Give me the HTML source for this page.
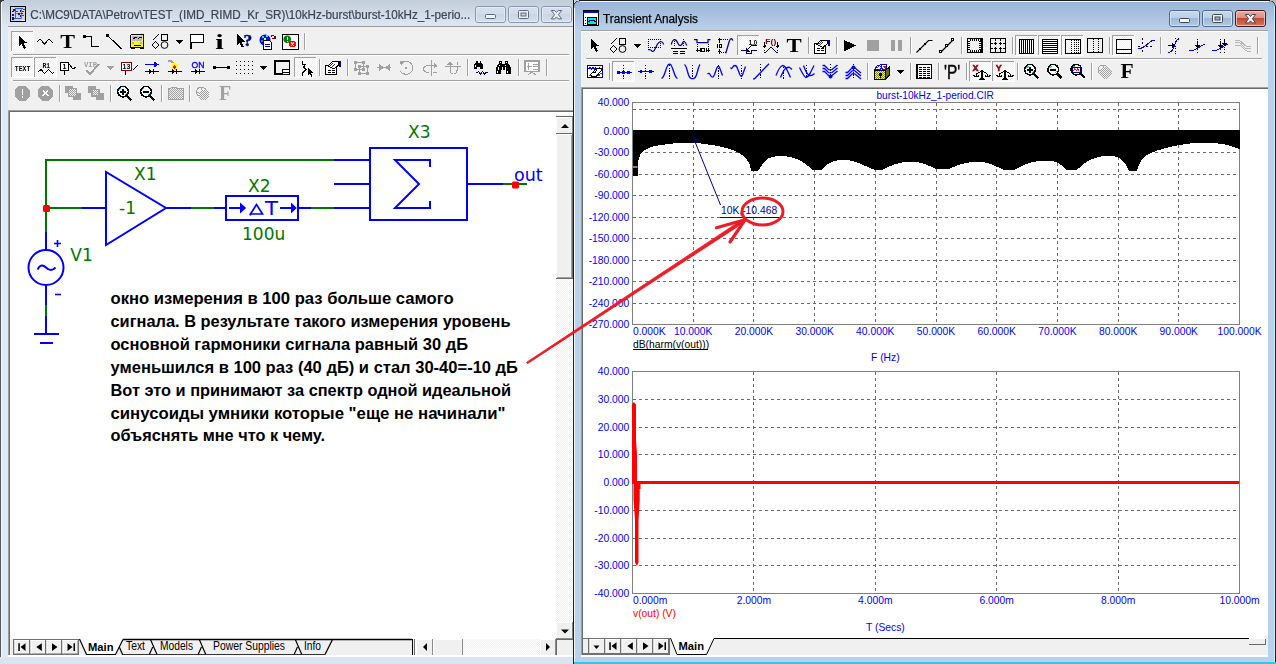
<!DOCTYPE html>
<html lang="ru"><head><meta charset="utf-8"><title>Micro-Cap Transient Analysis</title>
<style>
html,body{margin:0;padding:0;background:#fff;overflow:hidden}
body{width:1276px;height:664px;position:relative;font-family:"Liberation Sans",sans-serif}
svg{position:absolute;left:0;top:0;display:block}
.ls{font-family:"Liberation Sans",sans-serif}
.lsb{font-family:"Liberation Sans",sans-serif;font-weight:bold}
.dv{font-family:"DejaVu Sans",sans-serif}
.dvc{font-family:"DejaVu Sans Condensed","DejaVu Sans",sans-serif;font-weight:bold}
.lser{font-family:"Liberation Serif",serif;font-weight:bold}
.mono{font-family:"Liberation Mono",monospace;font-weight:bold}
.ce{shape-rendering:crispEdges}
</style></head><body>
<svg width="1276" height="664" viewBox="0 0 1276 664">
<defs>
<linearGradient id="gInact" x1="0" y1="0" x2="0" y2="1"><stop offset="0" stop-color="#c1cdd9"/><stop offset="1" stop-color="#dfe9f5"/></linearGradient>
<linearGradient id="gAct" x1="0" y1="0" x2="0" y2="1"><stop offset="0" stop-color="#98b4d6"/><stop offset="1" stop-color="#bbd2eb"/></linearGradient>
<linearGradient id="gBtnI" x1="0" y1="0" x2="0" y2="1"><stop offset="0" stop-color="#d6e0ec"/><stop offset="0.45" stop-color="#d2dde9"/><stop offset="0.45" stop-color="#c7d4e2"/><stop offset="1" stop-color="#d6e1ee"/></linearGradient>
<linearGradient id="gBtnA" x1="0" y1="0" x2="0" y2="1"><stop offset="0" stop-color="#c6d8ed"/><stop offset="0.45" stop-color="#bcd0e8"/><stop offset="0.45" stop-color="#9bb7d6"/><stop offset="1" stop-color="#b4cbe6"/></linearGradient>
<linearGradient id="gBtnX" x1="0" y1="0" x2="0" y2="1"><stop offset="0" stop-color="#ebb0a4"/><stop offset="0.45" stop-color="#dc8e7d"/><stop offset="0.45" stop-color="#c2432a"/><stop offset="1" stop-color="#d67b64"/></linearGradient>
<pattern id="dith" width="2" height="2" patternUnits="userSpaceOnUse"><rect width="2" height="2" fill="#f0f0f0"/><rect width="1" height="1" fill="#fff"/><rect x="1" y="1" width="1" height="1" fill="#fff"/></pattern>
</defs>
<rect x="0" y="0" width="573" height="664" fill="#dfe9f5" />
<rect x="0" y="0" width="573" height="27" fill="url(#gInact)" />
<rect x="0" y="0" width="1" height="664" fill="#55595e" />
<rect x="1" y="2" width="1" height="662" fill="#f4f8fc" />
<path d="M0 0h4v1h-2v1h-1v2h-1z" fill="#3a3a3a" stroke="none" stroke-width="1" />
<rect x="8" y="26" width="565" height="631" fill="#f0f0f0" />
<rect x="8" y="26" width="565" height="1" fill="#9a9a9a" />
<rect x="0" y="657" width="573" height="7" fill="#d9e4f2" />
<rect x="475.5" y="6.5" width="30" height="16" rx="2.5" fill="url(#gBtnI)" stroke="#8a97ab" stroke-width="1"/>
<rect x="476.5" y="7.5" width="28" height="14" rx="1.5" fill="none" stroke="#e6edf6" stroke-width="1" opacity="0.8"/>
<rect x="485.5" y="14.5" width="10" height="4" rx="1" fill="#eef1f5" stroke="#5f6878" stroke-width="1"/>
<rect x="508.5" y="6.5" width="30" height="16" rx="2.5" fill="url(#gBtnI)" stroke="#8a97ab" stroke-width="1"/>
<rect x="509.5" y="7.5" width="28" height="14" rx="1.5" fill="none" stroke="#e6edf6" stroke-width="1" opacity="0.8"/>
<rect x="518.5" y="10.5" width="10" height="8" rx="1" fill="#eef1f5" stroke="#5f6878" stroke-width="1"/>
<rect x="521.0" y="13.0" width="5" height="3" fill="#c9d5e3" stroke="#5f6878" stroke-width="1"/>
<rect x="541.5" y="6.5" width="30" height="16" rx="2.5" fill="url(#gBtnI)" stroke="#8a97ab" stroke-width="1"/>
<rect x="542.5" y="7.5" width="28" height="14" rx="1.5" fill="none" stroke="#e6edf6" stroke-width="1" opacity="0.8"/>
<path d="M551.3 10.5L554.8 10.5L556.5 12.5L558.2 10.5L561.7 10.5L558.4 14.7L561.7 18.9L558.2 18.9L556.5 16.9L554.8 18.9L551.3 18.9L554.6 14.7z" fill="#eef1f5" stroke="#5f6878" stroke-width="1" stroke-linejoin="round"/>
<path d="M573 664V7a7 7 0 0 1 7-7h689a7 7 0 0 1 7 7V664z" fill="#b9d1ea"/>
<path d="M574 31V7a6 6 0 0 1 6-6h689a6 6 0 0 1 6 6V31z" fill="url(#gAct)"/>
<rect x="580" y="1" width="689" height="1" fill="#f2f7fc" />
<rect x="1274" y="6" width="1" height="656" fill="#cdeefb" />
<path d="M573.5 664V7a6.500 6.500 0 0 1 6.500-6.500h689a6.500 6.500 0 0 1 6.500 6.500V664" fill="none" stroke="#1c1c1c" stroke-width="1"/>
<rect x="573" y="0" width="703" height="1" fill="#1c1c1c" />
<path d="M573 0h6v1h-3v1h-1v1h-1v2h-1z" fill="#c9d3de" stroke="none" stroke-width="1" />
<path d="M1276 0h-6v1h3v1h1v1h1v2h1z" fill="#b8b8b8" stroke="none" stroke-width="1" />
<rect x="574" y="8" width="1" height="656" fill="#f4f8fc" />
<rect x="581" y="30" width="687" height="627" fill="#fff" />
<rect x="581" y="30" width="687" height="1" fill="#a0a0a0" />
<rect x="581" y="31" width="687" height="1" fill="#fff" />
<rect x="581" y="32" width="687" height="55" fill="#f0f0f0" />
<rect x="581" y="87" width="687" height="570" fill="#fff" />
<rect x="581" y="87" width="687" height="1" fill="#a0a0a0" />
<rect x="581" y="87" width="1" height="568" fill="#a0a0a0" />
<rect x="582" y="88" width="686" height="1" fill="#696969" />
<rect x="582" y="88" width="1" height="567" fill="#696969" />
<rect x="574" y="662" width="702" height="2" fill="#30c8e8" />
<rect x="573" y="0" width="1" height="664" fill="#1c1c1c" />
<rect x="1169.5" y="10.5" width="30" height="16" rx="2.5" fill="url(#gBtnA)" stroke="#52688a" stroke-width="1"/>
<rect x="1170.5" y="11.5" width="28" height="14" rx="1.5" fill="none" stroke="#dbe7f5" stroke-width="1" opacity="0.8"/>
<rect x="1179.5" y="18.5" width="10" height="4" rx="1" fill="#f4f4f4" stroke="#3c4656" stroke-width="1"/>
<rect x="1202.5" y="10.5" width="30" height="16" rx="2.5" fill="url(#gBtnA)" stroke="#52688a" stroke-width="1"/>
<rect x="1203.5" y="11.5" width="28" height="14" rx="1.5" fill="none" stroke="#dbe7f5" stroke-width="1" opacity="0.8"/>
<rect x="1212.5" y="14.5" width="10" height="8" rx="1" fill="#f4f4f4" stroke="#3c4656" stroke-width="1"/>
<rect x="1215.0" y="17.0" width="5" height="3" fill="#9ab8da" stroke="#3c4656" stroke-width="1"/>
<rect x="1235.5" y="10.5" width="30" height="16" rx="2.5" fill="url(#gBtnX)" stroke="#4a1a24" stroke-width="1"/>
<rect x="1236.5" y="11.5" width="28" height="14" rx="1.5" fill="none" stroke="#f3c9c0" stroke-width="1" opacity="0.8"/>
<path d="M1245.3 14.5L1248.8 14.5L1250.5 16.5L1252.2 14.5L1255.7 14.5L1252.4 18.7L1255.7 22.9L1252.2 22.9L1250.5 20.9L1248.8 22.9L1245.3 22.9L1248.6 18.7z" fill="#f4f4f4" stroke="#3c4656" stroke-width="1" stroke-linejoin="round"/>
<rect x="8" y="110" width="565" height="546" fill="#a0a0a0" />
<rect x="9" y="111" width="564" height="545" fill="#696969" />
<rect x="10" y="112" width="563" height="544" fill="#fff" />
<rect x="556" y="112" width="17" height="527" fill="url(#dith)" />
<rect x="556" y="112" width="17" height="4" fill="#fff" />
<rect x="556" y="115" width="16" height="1" fill="#f0f0f0" />
<rect x="556" y="116" width="17" height="1" fill="#696969" />
<rect x="556" y="117" width="17" height="17" fill="#f0f0f0" />
<rect x="556" y="117" width="17" height="1" fill="#fff" />
<rect x="556" y="117" width="1" height="17" fill="#fff" />
<rect x="556" y="133" width="17" height="1" fill="#8a8a8a" />
<rect x="572" y="117" width="1" height="17" fill="#8a8a8a" />
<rect x="556" y="133" width="17" height="1" fill="#696969" />
<path d="M561 128h8l-4-4z" fill="#000" stroke="none" stroke-width="1" />
<rect x="556" y="134" width="17" height="145" fill="#f0f0f0" />
<rect x="556" y="134" width="17" height="1" fill="#fff" />
<rect x="556" y="134" width="1" height="145" fill="#fff" />
<rect x="556" y="278" width="17" height="1" fill="#8a8a8a" />
<rect x="572" y="134" width="1" height="145" fill="#8a8a8a" />
<rect x="556" y="278" width="17" height="1" fill="#696969" />
<rect x="557" y="277" width="15" height="1" fill="#a0a0a0" />
<rect x="571" y="135" width="1" height="143" fill="#a0a0a0" />
<rect x="572" y="134" width="1" height="145" fill="#696969" />
<rect x="556" y="622" width="17" height="17" fill="#f0f0f0" />
<rect x="556" y="622" width="17" height="1" fill="#fff" />
<rect x="556" y="622" width="1" height="17" fill="#fff" />
<rect x="556" y="638" width="17" height="1" fill="#8a8a8a" />
<rect x="572" y="622" width="1" height="17" fill="#8a8a8a" />
<path d="M561 629.500h8l-4 4z" fill="#000" stroke="none" stroke-width="1" />
<rect x="10" y="639" width="563" height="17" fill="#f0f0f0" />
<rect x="13" y="639" width="66" height="16" fill="#707070" />
<rect x="14.5" y="640" width="14.5" height="13.500" fill="#f0f0f0"/>
<rect x="14.5" y="640" width="14.5" height="1" fill="#fff"/><rect x="14.5" y="640" width="1" height="13.500" fill="#fff"/>
<rect x="30.5" y="640" width="14.5" height="13.500" fill="#f0f0f0"/>
<rect x="30.5" y="640" width="14.5" height="1" fill="#fff"/><rect x="30.5" y="640" width="1" height="13.500" fill="#fff"/>
<rect x="46.5" y="640" width="14.5" height="13.500" fill="#f0f0f0"/>
<rect x="46.5" y="640" width="14.5" height="1" fill="#fff"/><rect x="46.5" y="640" width="1" height="13.500" fill="#fff"/>
<rect x="62.5" y="640" width="15" height="13.500" fill="#f0f0f0"/>
<rect x="62.5" y="640" width="15" height="1" fill="#fff"/><rect x="62.5" y="640" width="1" height="13.500" fill="#fff"/>
<path d="M18.300 643.300h1.500v7.600h-1.500z M25.500 643.300v7.600l-5-3.800z" fill="#000" stroke="none" stroke-width="1" />
<path d="M41.800 643.300v7.600l-5.500-3.800z" fill="#000" stroke="none" stroke-width="1" />
<path d="M52 643.300v7.600l5.500-3.800z" fill="#000" stroke="none" stroke-width="1" />
<path d="M67.500 643.300v7.600l5-3.800z M73.500 643.300h1.500v7.600h-1.500z" fill="#000" stroke="none" stroke-width="1" />
<rect x="79" y="639" width="333" height="16" fill="#f0f0f0" />
<path d="M79.500 639L86.500 655H115.500L123 639z" fill="#fff" stroke="none" stroke-width="1" />
<line x1="123" y1="639.5" x2="412" y2="639.5" stroke="#000" stroke-width="1.4" />
<line x1="122" y1="654.5" x2="325" y2="654.5" stroke="#333" stroke-width="1" />
<path d="M79.500 639L86.500 654.500H115.500L123 639.500" fill="none" stroke="#000" stroke-width="1.2" />
<path d="M119.300 647L122.600 654.500" fill="none" stroke="#000" stroke-width="1.2" />
<path d="M150.5 639.500L157.0 654.500 M149.3 654.500L152.7 647" fill="none" stroke="#000" stroke-width="1.2" />
<path d="M199.3 639.500L205.8 654.500 M198.10000000000002 654.500L201.5 647" fill="none" stroke="#000" stroke-width="1.2" />
<path d="M295.3 639.500L301.8 654.500 M294.1 654.500L297.5 647" fill="none" stroke="#000" stroke-width="1.2" />
<path d="M325 654.500L332.500 639.500" fill="none" stroke="#000" stroke-width="1.2" />
<text x="88" y="650.5" font-size="11" fill="#000" class="lsb" text-anchor="start" textLength="25.5" lengthAdjust="spacingAndGlyphs">Main</text>
<text x="126" y="650.3" font-size="12" fill="#000" class="ls" text-anchor="start" textLength="19" lengthAdjust="spacingAndGlyphs">Text</text>
<text x="160" y="650.3" font-size="12" fill="#000" class="ls" text-anchor="start" textLength="33" lengthAdjust="spacingAndGlyphs">Models</text>
<text x="213" y="650.3" font-size="12" fill="#000" class="ls" text-anchor="start" textLength="72" lengthAdjust="spacingAndGlyphs">Power Supplies</text>
<text x="304" y="650.3" font-size="12" fill="#000" class="ls" text-anchor="start" textLength="17" lengthAdjust="spacingAndGlyphs">Info</text>
<rect x="412" y="639" width="1" height="17" fill="#000" />
<rect x="413" y="639" width="1" height="17" fill="#f0f0f0" />
<rect x="414" y="639" width="1" height="17" fill="#696969" />
<rect x="415" y="639" width="1" height="17" fill="#fff" />
<rect x="416" y="639" width="140" height="17" fill="url(#dith)" />
<rect x="416" y="639" width="17" height="17" fill="#f0f0f0" />
<rect x="416" y="639" width="17" height="1" fill="#fff" />
<rect x="416" y="639" width="1" height="17" fill="#fff" />
<rect x="416" y="655" width="17" height="1" fill="#8a8a8a" />
<rect x="432" y="639" width="1" height="17" fill="#8a8a8a" />
<path d="M427 643v8l-4-4z" fill="#000" stroke="none" stroke-width="1" />
<rect x="433" y="639" width="30" height="17" fill="#f0f0f0" />
<rect x="433" y="639" width="30" height="1" fill="#fff" />
<rect x="433" y="639" width="1" height="17" fill="#fff" />
<rect x="433" y="655" width="30" height="1" fill="#8a8a8a" />
<rect x="462" y="639" width="1" height="17" fill="#8a8a8a" />
<rect x="540" y="639" width="16" height="17" fill="#f0f0f0" />
<rect x="540" y="639" width="16" height="1" fill="#fff" />
<rect x="540" y="639" width="1" height="17" fill="#fff" />
<rect x="540" y="655" width="16" height="1" fill="#8a8a8a" />
<rect x="555" y="639" width="1" height="17" fill="#8a8a8a" />
<path d="M546 643v8l4-4z" fill="#000" stroke="none" stroke-width="1" />
<rect x="556" y="639" width="17" height="17" fill="#f0f0f0" />
<rect x="556" y="639" width="17" height="1" fill="#696969" />
<rect x="556" y="639" width="1" height="16" fill="#696969" />
<rect x="8" y="655" width="565" height="2" fill="#fff" />
<g fill="none" stroke-width="2" stroke-linecap="butt" class="ce">
<path d="M46 232V160H334" stroke="#007800"/>
<path d="M334 160H370" stroke="#0000ff"/>
<path d="M46 208H82" stroke="#007800"/><path d="M82 208H106" stroke="#0000ff"/>
<path d="M166 208H191" stroke="#0000ff"/><path d="M191 208H214" stroke="#007800"/><path d="M214 208H226" stroke="#0000ff"/>
<path d="M299 208H311" stroke="#0000ff"/><path d="M311 208H334" stroke="#007800"/><path d="M334 208H370" stroke="#0000ff"/>
<path d="M334 184H370" stroke="#0000ff"/>
<path d="M467 184H503" stroke="#0000ff"/><path d="M503 184H527" stroke="#007800"/>
<path d="M46 232V250" stroke="#0000ff"/>
<path d="M46 285V305" stroke="#0000ff"/><path d="M46 305V315.500" stroke="#007800"/><path d="M46 315.500V334" stroke="#0000ff"/>
<path d="M34 333.500H59 M40 343H53" stroke="#0000ff"/>
<rect x="226" y="196" width="72" height="24" stroke="#0000ff"/>
<rect x="370" y="148" width="97" height="72" stroke="#0000ff"/>
</g>
<g fill="none" stroke="#0000ff" stroke-width="2">
<path d="M106 172V245L166 208z" stroke-linejoin="miter"/>
<path d="M430 167V160H395L419 184L395 208H430V201" stroke-linejoin="miter"/>
<circle cx="46" cy="267.500" r="17.500"/>
<path d="M37.500 269.500q3.500-7 8.500-2t9.500 0" stroke-width="2"/>
</g>
<g stroke="#0000ff" stroke-width="2" fill="#0000ff"><path d="M229 208H241" /><path d="M240 202.500L246.200 208L240 213.500z" stroke="none"/><path d="M280 208H292"/><path d="M291 202.500L296.800 208L291 213.500z" stroke="none"/><path d="M250.500 214L256.500 204.500L262.500 214z M250.500 214v1.500" fill="none" stroke-width="1.700"/></g>
<text x="265" y="215" font-size="19" fill="#0000ff" class="dv" text-anchor="start" textLength="13" lengthAdjust="spacingAndGlyphs">T</text>
<path d="M54 243.500h7 M57.500 240v7" fill="none" stroke="#0000ff" stroke-width="1.6" />
<path d="M55 294.500h6" fill="none" stroke="#0000ff" stroke-width="1.6" />
<rect x="43" y="205" width="7" height="7" rx="1.5" fill="#ff0000"/>
<rect x="512" y="181.500" width="7" height="7" rx="1.5" fill="#ff0000"/>
<text x="134" y="180" font-size="17" fill="#007800" class="dv" text-anchor="start" >X1</text>
<text x="119" y="214" font-size="17" fill="#007800" class="dv" text-anchor="start" >-1</text>
<text x="248" y="191.5" font-size="17" fill="#007800" class="dv" text-anchor="start" >X2</text>
<text x="242" y="240" font-size="17" fill="#007800" class="dv" text-anchor="start" >100u</text>
<text x="408" y="137.5" font-size="17" fill="#007800" class="dv" text-anchor="start" >X3</text>
<text x="70.3" y="261.3" font-size="17" fill="#007800" class="dv" text-anchor="start" >V1</text>
<text x="514" y="181" font-size="17.5" fill="#0000ff" class="dv" text-anchor="start" >out</text>
<text x="110.5" y="304" font-size="17" fill="#000" class="lsb" text-anchor="start" textLength="343.1" lengthAdjust="spacingAndGlyphs">окно измерения в 100 раз больше самого</text>
<text x="110.5" y="327" font-size="17" fill="#000" class="lsb" text-anchor="start" textLength="400.0" lengthAdjust="spacingAndGlyphs">сигнала. В результате такого измерения уровень</text>
<text x="110.5" y="349.7" font-size="17" fill="#000" class="lsb" text-anchor="start" textLength="357.5" lengthAdjust="spacingAndGlyphs">основной гармоники сигнала равный 30 дБ</text>
<text x="110.5" y="372.6" font-size="17" fill="#000" class="lsb" text-anchor="start" textLength="407.5" lengthAdjust="spacingAndGlyphs">уменьшился в 100 раз (40 дБ) и стал 30-40=-10 дБ</text>
<text x="110.5" y="395.8" font-size="17" fill="#000" class="lsb" text-anchor="start" textLength="400.5" lengthAdjust="spacingAndGlyphs">Вот это и принимают за спектр одной идеальной</text>
<text x="110.5" y="418.6" font-size="17" fill="#000" class="lsb" text-anchor="start" textLength="395.0" lengthAdjust="spacingAndGlyphs">синусоиды умники которые &quot;еще не начинали&quot;</text>
<text x="110.5" y="441.4" font-size="17" fill="#000" class="lsb" text-anchor="start" textLength="214.5" lengthAdjust="spacingAndGlyphs">объяснять мне что к чему.</text>
<line x1="693.5" y1="103" x2="693.5" y2="324.5" stroke="#6a6a6a" stroke-width="1" stroke-dasharray="3 3" class="ce"/>
<line x1="753.5" y1="103" x2="753.5" y2="324.5" stroke="#6a6a6a" stroke-width="1" stroke-dasharray="3 3" class="ce"/>
<line x1="814.5" y1="103" x2="814.5" y2="324.5" stroke="#6a6a6a" stroke-width="1" stroke-dasharray="3 3" class="ce"/>
<line x1="875.5" y1="103" x2="875.5" y2="324.5" stroke="#6a6a6a" stroke-width="1" stroke-dasharray="3 3" class="ce"/>
<line x1="936.5" y1="103" x2="936.5" y2="324.5" stroke="#6a6a6a" stroke-width="1" stroke-dasharray="3 3" class="ce"/>
<line x1="996.5" y1="103" x2="996.5" y2="324.5" stroke="#6a6a6a" stroke-width="1" stroke-dasharray="3 3" class="ce"/>
<line x1="1057.5" y1="103" x2="1057.5" y2="324.5" stroke="#6a6a6a" stroke-width="1" stroke-dasharray="3 3" class="ce"/>
<line x1="1118.5" y1="103" x2="1118.5" y2="324.5" stroke="#6a6a6a" stroke-width="1" stroke-dasharray="3 3" class="ce"/>
<line x1="1178.5" y1="103" x2="1178.5" y2="324.5" stroke="#6a6a6a" stroke-width="1" stroke-dasharray="3 3" class="ce"/>
<line x1="633" y1="109.5" x2="1237" y2="109.5" stroke="#6a6a6a" stroke-width="1" stroke-dasharray="3 3" class="ce"/>
<line x1="633" y1="131.5" x2="1237" y2="131.5" stroke="#6a6a6a" stroke-width="1" stroke-dasharray="3 3" class="ce"/>
<line x1="633" y1="152.5" x2="1237" y2="152.5" stroke="#6a6a6a" stroke-width="1" stroke-dasharray="3 3" class="ce"/>
<line x1="633" y1="174.5" x2="1237" y2="174.5" stroke="#6a6a6a" stroke-width="1" stroke-dasharray="3 3" class="ce"/>
<line x1="633" y1="195.5" x2="1237" y2="195.5" stroke="#6a6a6a" stroke-width="1" stroke-dasharray="3 3" class="ce"/>
<line x1="633" y1="217.5" x2="1237" y2="217.5" stroke="#6a6a6a" stroke-width="1" stroke-dasharray="3 3" class="ce"/>
<line x1="633" y1="238.5" x2="1237" y2="238.5" stroke="#6a6a6a" stroke-width="1" stroke-dasharray="3 3" class="ce"/>
<line x1="633" y1="260.5" x2="1237" y2="260.5" stroke="#6a6a6a" stroke-width="1" stroke-dasharray="3 3" class="ce"/>
<line x1="633" y1="281.5" x2="1237" y2="281.5" stroke="#6a6a6a" stroke-width="1" stroke-dasharray="3 3" class="ce"/>
<line x1="633" y1="303.5" x2="1237" y2="303.5" stroke="#6a6a6a" stroke-width="1" stroke-dasharray="3 3" class="ce"/>
<rect x="632.5" y="102.5" width="607.0" height="222.0" fill="none" stroke="#808080" stroke-width="1"/>
<path d="M633 130H1240V149.5L1240 149.5L1237 148.2L1234 147L1230 145.7L1225 144.5L1219 143.6L1212 143L1203 142.7L1194 143L1187 143.8L1180 145L1173 146.3L1167 147.8L1161 149.4L1155 151.3L1151 153L1147 155L1144 157L1142 159.5L1140.5 162L1139 165L1138 168L1137 170.5L1129 170.5L1127 167L1126 165L1124 162.5L1122 160.3L1120 158.5L1117 157.2L1114 156.3L1108 156L1102 156.3L1098 157.2L1094 158.5L1090 160L1087 161.5L1084 163.5L1081 166L1079 168L1077 169.8L1066 169.8L1063 167L1061 165L1059 163.5L1056 162.2L1053 161.3L1050 161L1045 160.6L1039 161L1033 162L1028 163.5L1024 165L1020 167L1017 168.4L1014 169.8L1004 169.8L1000 168L997 166.8L993 165L989 163.5L984 162.3L980 162L975 162L970 162.4L965 163.3L960 164.6L956 166L952 167.5L949 168.8L936 168.8L933 167.5L929 165.8L925 164L921 162.8L916 162L911 161.8L906 162L901 162.6L897 163.7L892 165.3L888 167L885 168.5L882 170L875 170L870 168L866 166.2L861 164L857 162.4L852 161L848 160.2L843 159.8L838 160.3L833 161.5L829 163.3L826 165.5L824 167.5L821.5 169.8L812 169.8L808 166L805 163.5L801 161L796 158.8L790 157L786 156.3L781 156L777 156.2L773 156.8L769 158.2L766 160L764 162L762 165L760 168L758.5 170.5L751 170.5L750 165L748 161.5L746 158.5L743 155.7L740 153.5L735 151L730 149L721 146.8L712 145L702 143.6L693 142.8L685 142.7L677 143L668 144L660 145.2L653 146.6L647 148.7L643 151L640 155L638.5 160L637.5 166L637.5 176H633z" fill="#000" class="ce"/>
<rect x="633" y="166.5" width="4.5" height="1" fill="#fff" />
<text x="629.3" y="106.2" font-size="10.3" fill="#0000ff" class="ls" text-anchor="end" >40.000</text>
<text x="629.3" y="135.2" font-size="10.3" fill="#0000ff" class="ls" text-anchor="end" >0.000</text>
<text x="629.3" y="156.2" font-size="10.3" fill="#0000ff" class="ls" text-anchor="end" >-30.000</text>
<text x="629.3" y="178.2" font-size="10.3" fill="#0000ff" class="ls" text-anchor="end" >-60.000</text>
<text x="629.3" y="199.2" font-size="10.3" fill="#0000ff" class="ls" text-anchor="end" >-90.000</text>
<text x="629.3" y="221.2" font-size="10.3" fill="#0000ff" class="ls" text-anchor="end" >-120.000</text>
<text x="629.3" y="242.2" font-size="10.3" fill="#0000ff" class="ls" text-anchor="end" >-150.000</text>
<text x="629.3" y="264.2" font-size="10.3" fill="#0000ff" class="ls" text-anchor="end" >-180.000</text>
<text x="629.3" y="285.2" font-size="10.3" fill="#0000ff" class="ls" text-anchor="end" >-210.000</text>
<text x="629.3" y="307.2" font-size="10.3" fill="#0000ff" class="ls" text-anchor="end" >-240.000</text>
<text x="629.3" y="328.2" font-size="10.3" fill="#0000ff" class="ls" text-anchor="end" >-270.000</text>
<text x="633" y="334.7" font-size="10.3" fill="#0000ff" class="ls" text-anchor="start" >0.000K</text>
<text x="693.2" y="334.7" font-size="10.3" fill="#0000ff" class="ls" text-anchor="middle" >10.000K</text>
<text x="753.9" y="334.7" font-size="10.3" fill="#0000ff" class="ls" text-anchor="middle" >20.000K</text>
<text x="814.6" y="334.7" font-size="10.3" fill="#0000ff" class="ls" text-anchor="middle" >30.000K</text>
<text x="875.3" y="334.7" font-size="10.3" fill="#0000ff" class="ls" text-anchor="middle" >40.000K</text>
<text x="936.0" y="334.7" font-size="10.3" fill="#0000ff" class="ls" text-anchor="middle" >50.000K</text>
<text x="996.7" y="334.7" font-size="10.3" fill="#0000ff" class="ls" text-anchor="middle" >60.000K</text>
<text x="1057.4" y="334.7" font-size="10.3" fill="#0000ff" class="ls" text-anchor="middle" >70.000K</text>
<text x="1118.1" y="334.7" font-size="10.3" fill="#0000ff" class="ls" text-anchor="middle" >80.000K</text>
<text x="1178.8000000000002" y="334.7" font-size="10.3" fill="#0000ff" class="ls" text-anchor="middle" >90.000K</text>
<text x="1239.5" y="334.7" font-size="10.3" fill="#0000ff" class="ls" text-anchor="middle" >100.000K</text>
<text x="876.5" y="99" font-size="10.3" fill="#0000ff" class="ls" text-anchor="start" textLength="117.300" lengthAdjust="spacingAndGlyphs">burst-10kHz_1-period.CIR</text>
<text x="633" y="347.5" font-size="10.3" fill="#000" class="ls" text-anchor="start" >dB(harm(v(out)))</text>
<rect x="633" y="349" width="75" height="1" fill="#000" />
<text x="871" y="361" font-size="10.3" fill="#0000ff" class="ls" text-anchor="start" >F (Hz)</text>
<line x1="693.5" y1="138" x2="720.5" y2="205" stroke="#000090" stroke-width="1" />
<path d="M692.5 137l5 3.500l-3 1.500z" fill="#000090" stroke="none" stroke-width="1" />
<line x1="720" y1="217.5" x2="779" y2="217.5" stroke="#000090" stroke-width="1" />
<text x="721" y="214" font-size="10.3" fill="#000090" class="ls" text-anchor="start" >10K,-10.468</text>
<line x1="753.5" y1="372" x2="753.5" y2="593.5" stroke="#6a6a6a" stroke-width="1" stroke-dasharray="3 3" class="ce"/>
<line x1="875.5" y1="372" x2="875.5" y2="593.5" stroke="#6a6a6a" stroke-width="1" stroke-dasharray="3 3" class="ce"/>
<line x1="996.5" y1="372" x2="996.5" y2="593.5" stroke="#6a6a6a" stroke-width="1" stroke-dasharray="3 3" class="ce"/>
<line x1="1118.5" y1="372" x2="1118.5" y2="593.5" stroke="#6a6a6a" stroke-width="1" stroke-dasharray="3 3" class="ce"/>
<line x1="633" y1="399.5" x2="1237" y2="399.5" stroke="#6a6a6a" stroke-width="1" stroke-dasharray="3 3" class="ce"/>
<line x1="633" y1="427.5" x2="1237" y2="427.5" stroke="#6a6a6a" stroke-width="1" stroke-dasharray="3 3" class="ce"/>
<line x1="633" y1="454.5" x2="1237" y2="454.5" stroke="#6a6a6a" stroke-width="1" stroke-dasharray="3 3" class="ce"/>
<line x1="633" y1="482.5" x2="1237" y2="482.5" stroke="#6a6a6a" stroke-width="1" stroke-dasharray="3 3" class="ce"/>
<line x1="633" y1="510.5" x2="1237" y2="510.5" stroke="#6a6a6a" stroke-width="1" stroke-dasharray="3 3" class="ce"/>
<line x1="633" y1="538.5" x2="1237" y2="538.5" stroke="#6a6a6a" stroke-width="1" stroke-dasharray="3 3" class="ce"/>
<line x1="633" y1="565.5" x2="1237" y2="565.5" stroke="#6a6a6a" stroke-width="1" stroke-dasharray="3 3" class="ce"/>
<rect x="632.5" y="371.5" width="607.0" height="222.0" fill="none" stroke="#808080" stroke-width="1"/>
<text x="629.3" y="375.2" font-size="10.3" fill="#0000ff" class="ls" text-anchor="end" >40.000</text>
<text x="629.3" y="403.2" font-size="10.3" fill="#0000ff" class="ls" text-anchor="end" >30.000</text>
<text x="629.3" y="431.2" font-size="10.3" fill="#0000ff" class="ls" text-anchor="end" >20.000</text>
<text x="629.3" y="458.2" font-size="10.3" fill="#0000ff" class="ls" text-anchor="end" >10.000</text>
<text x="629.3" y="486.2" font-size="10.3" fill="#0000ff" class="ls" text-anchor="end" >0.000</text>
<text x="629.3" y="514.2" font-size="10.3" fill="#0000ff" class="ls" text-anchor="end" >-10.000</text>
<text x="629.3" y="542.2" font-size="10.3" fill="#0000ff" class="ls" text-anchor="end" >-20.000</text>
<text x="629.3" y="569.2" font-size="10.3" fill="#0000ff" class="ls" text-anchor="end" >-30.000</text>
<text x="629.3" y="597.2" font-size="10.3" fill="#0000ff" class="ls" text-anchor="end" >-40.000</text>
<text x="633" y="604" font-size="10.3" fill="#0000ff" class="ls" text-anchor="start" >0.000m</text>
<text x="753.9" y="604" font-size="10.3" fill="#0000ff" class="ls" text-anchor="middle" >2.000m</text>
<text x="875.3" y="604" font-size="10.3" fill="#0000ff" class="ls" text-anchor="middle" >4.000m</text>
<text x="996.7" y="604" font-size="10.3" fill="#0000ff" class="ls" text-anchor="middle" >6.000m</text>
<text x="1118.1" y="604" font-size="10.3" fill="#0000ff" class="ls" text-anchor="middle" >8.000m</text>
<text x="1239.5" y="604" font-size="10.3" fill="#0000ff" class="ls" text-anchor="middle" >10.000m</text>
<text x="633" y="617" font-size="10.3" fill="#ff0000" class="ls" text-anchor="start" >v(out) (V)</text>
<text x="866" y="631" font-size="10.3" fill="#0000ff" class="ls" text-anchor="start" >T (Secs)</text>
<path d="M637 482.500H1239" fill="none" stroke="#ff0000" stroke-width="3"/>
<path d="M632 484V404.500l1.800-2.500l2.200 2.500V440l1 14v27h3.500v8h-0.800V500l-1.200 20v42.500l-1.700 3.500l-1.800-3.500V520l-1.500-20V484z" fill="#ff0000"/>
<g shape-rendering="crispEdges" style="will-change:transform">
<text x="30.3" y="19" font-size="12" fill="#3e4450" class="ls" text-anchor="start" textLength="440" lengthAdjust="spacingAndGlyphs" stroke="#3e4450" stroke-width="0.2">C:\MC9\DATA\Petrov\TEST_(IMD_RIMD_Kr_SR)\10kHz-burst\burst-10kHz_1-perio...</text>
<text x="603" y="23" font-size="12.3" fill="#000" class="ls" text-anchor="start" textLength="95" lengthAdjust="spacingAndGlyphs" stroke="#000" stroke-width="0.25">Transient Analysis</text>
<rect x="10" y="6" width="16" height="16" fill="#000" />
<rect x="11" y="7" width="14" height="14" fill="#d8d4c8" />
<g class="ce">
<rect x="15" y="8" width="1" height="11" fill="#2a5be0" />
<rect x="15" y="8" width="8" height="1" fill="#2a5be0" />
<rect x="13" y="18" width="9" height="1" fill="#2a5be0" />
<rect x="21" y="9" width="1" height="10" fill="#5a86e8" />
<rect x="16" y="13" width="5" height="1" fill="#5a86e8" />
<rect x="11.5" y="10.5" width="2.5" height="1.5" fill="#0000ff" />
<rect x="13" y="9" width="1.5" height="2" fill="#0000ff" />
<rect x="12" y="13.5" width="2" height="2" fill="#0000ff" />
<rect x="12" y="17" width="1.5" height="3" fill="#0000ff" />
<rect x="18" y="12.5" width="2" height="2" fill="#0000ff" />
<rect x="19.5" y="10" width="1.5" height="2" fill="#0000ff" />
<rect x="19.5" y="14.5" width="1.5" height="2" fill="#0000ff" />
<rect x="21" y="12.5" width="1.5" height="1.5" fill="#0000ff" />
<rect x="16.2" y="10.7" width="2" height="1.2" fill="#ff0000" />
<rect x="22.8" y="8.8" width="2" height="1.2" fill="#ff0000" />
<rect x="21.8" y="11" width="2" height="1.2" fill="#ff0000" />
<rect x="21.8" y="15" width="2" height="1.2" fill="#ff0000" />
<rect x="20.5" y="19.5" width="4" height="1" fill="#fff" />
</g>
<rect x="583" y="10" width="16" height="16" fill="#000" />
<rect x="584" y="11" width="14" height="2" fill="#0000ff" />
<rect x="584" y="13" width="14" height="12" fill="#fff" />
<rect x="587" y="17" width="10" height="8" fill="#000" />
<rect x="588" y="18" width="8" height="6" fill="#00e8e8" />
<path d="M588.500 22q3.500-4 7 0" fill="none" stroke="#003" stroke-width="1" />
<rect x="585" y="17" width="1" height="1" fill="#000" />
<rect x="585" y="20" width="1" height="1" fill="#000" />
<rect x="585" y="23" width="1" height="1" fill="#000" />
<rect x="587" y="15.5" width="9" height="0.6" fill="#888" />
<rect x="13" y="54" width="556" height="1" fill="#a0a0a0" />
<rect x="13" y="55" width="556" height="1" fill="#fff" />
<rect x="13" y="80" width="556" height="1" fill="#a0a0a0" />
<rect x="13" y="81" width="556" height="1" fill="#fff" />
<rect x="11" y="31" width="22" height="20" fill="url(#dith)" />
<rect x="11" y="31" width="22" height="1" fill="#a0a0a0" />
<rect x="11" y="31" width="1" height="20" fill="#a0a0a0" />
<rect x="11" y="51" width="23" height="1" fill="#fff" />
<rect x="33" y="31" width="1" height="21" fill="#fff" />
<path d="M19 35.5v11.2l2.600-2.500l2.200 4.800l2.100-1l-2.200-4.600h3.800z" fill="#000" stroke="none" stroke-width="1" />
<path d="M36.500 42.500l3.500-3.500l4.500 5l4.500-5l4.500 4.500" fill="none" stroke="#000" stroke-width="1" stroke-linejoin="miter"/>
<text x="60.3" y="48" font-size="19.5" fill="#000" class="lser" text-anchor="start" textLength="14.800" lengthAdjust="spacingAndGlyphs">T</text>
<rect x="83" y="35" width="3" height="3" fill="#000" />
<path d="M86 36.500h5.500v10h7" fill="none" stroke="#000" stroke-width="1.2" />
<rect x="106" y="34" width="3" height="3" fill="#000" />
<path d="M108 36l13.500 13" fill="none" stroke="#000" stroke-width="1.2" />
<g>
<rect x="130.500" y="34.500" width="13" height="13" rx="1.500" fill="#ffff00" stroke="#000" stroke-width="1"/>
<rect x="132" y="36" width="10" height="5" fill="#b8b8c8" />
<path d="M133.500 39l1.500-1.500h2 M138 39l1.500-1.500h2" fill="none" stroke="#000" stroke-width="1" />
<rect x="131" y="47" width="3.5" height="2" fill="#000" />
<rect x="140" y="47" width="3.5" height="2" fill="#000" />
<rect x="133.5" y="44.5" width="7" height="1.2" fill="#000" />
<rect x="132" y="42" width="2" height="1.5" fill="#b0b0b0" />
<rect x="140" y="42" width="2" height="1.5" fill="#b0b0b0" />
</g>
<path d="M152.5 40.5l6.500-6.500" fill="none" stroke="#000" stroke-width="1" />
<rect x="161.5" y="34.5" width="6" height="6" fill="none" stroke="#000" stroke-width="1"/>
<path d="M155.5 41.5l3.500 3.500l-3.500 3.500l-3.500-3.500z" fill="none" stroke="#000" stroke-width="1" />
<circle cx="164.5" cy="45" r="3.400" fill="none" stroke="#000" stroke-width="1" shape-rendering="geometricPrecision"/>
<path d="M176 40.3h7.400l-3.700 3.800z" fill="#000" stroke="none" stroke-width="1" />
<rect x="190" y="34" width="1.6" height="15" fill="#000" />
<rect x="190.800" y="34.500" width="12.500" height="7.500" fill="#fff" stroke="#000" stroke-width="1"/>
<text x="215.3" y="49" font-size="22" fill="#000" class="lser" text-anchor="start" textLength="8.500" lengthAdjust="spacingAndGlyphs">i</text>
<path d="M237 34v11.2l2.600-2.500l2.200 4.800l2.100-1l-2.200-4.600h3.800z" fill="#000" stroke="none" stroke-width="1" />
<text x="243.5" y="46" font-size="17.5" fill="#000080" class="lser" text-anchor="start" stroke="#000080" stroke-width="0.5">?</text>
<circle cx="265" cy="40" r="5.500" fill="#0000ff" shape-rendering="geometricPrecision"/>
<rect x="262" y="36" width="2" height="2" fill="#00ff80" />
<rect x="266" y="35" width="2" height="2" fill="#00ffff" />
<rect x="264" y="38" width="2" height="1.5" fill="#ffff00" />
<rect x="260.5" y="40" width="2" height="2" fill="#00c000" />
<path d="M271 36.500q3-2.500 4 1.500" fill="none" stroke="#800000" stroke-width="1.3" />
<path d="M272.500 38.500h3.500v-3z" fill="#800000" stroke="none" stroke-width="1" />
<path d="M263.500 40.500h6l2 2v6.500h-8z" fill="#fff" stroke="#000" stroke-width="1"/>
<rect x="265" y="44" width="5" height="1" fill="#000080" />
<rect x="265" y="46" width="5" height="1" fill="#000080" />
<rect x="282.500" y="34.500" width="15.500" height="14.500" fill="#fff" stroke="#000" stroke-width="1"/>
<circle cx="287.200" cy="39.200" r="3.700" fill="#008000" shape-rendering="geometricPrecision"/>
<rect x="286.7" y="36.8" width="1.2" height="3" fill="#fff" />
<rect x="286.7" y="40.5" width="1.2" height="1.2" fill="#fff" />
<path d="M290.300 40.800h4.400l1.600 1.600v3.200l-1.600 1.600h-4.400l-1.600-1.600v-3.200z" fill="#ff0000" stroke="none" stroke-width="1" />
<path d="M291 42.500l3 3m0-3l-3 3" fill="none" stroke="#fff" stroke-width="1.1" shape-rendering="geometricPrecision"/>
<rect x="304" y="33" width="1" height="17" fill="#a0a0a0" />
<rect x="305" y="33" width="1" height="17" fill="#fff" />
<rect x="11" y="57" width="22" height="20" fill="url(#dith)" />
<rect x="11" y="57" width="22" height="1" fill="#a0a0a0" />
<rect x="11" y="57" width="1" height="20" fill="#a0a0a0" />
<rect x="11" y="77" width="23" height="1" fill="#fff" />
<rect x="33" y="57" width="1" height="21" fill="#fff" />
<rect x="34" y="57" width="22" height="20" fill="url(#dith)" />
<rect x="34" y="57" width="22" height="1" fill="#a0a0a0" />
<rect x="34" y="57" width="1" height="20" fill="#a0a0a0" />
<rect x="34" y="77" width="23" height="1" fill="#fff" />
<rect x="56" y="57" width="1" height="21" fill="#fff" />
<text x="14.8" y="71" font-size="7.2" fill="#000" class="mono" text-anchor="start" textLength="15.500" lengthAdjust="spacingAndGlyphs">TEXT</text>
<text x="42.5" y="67.8" font-size="6.8" fill="#000" class="mono" text-anchor="start" textLength="7.500" lengthAdjust="spacingAndGlyphs">R1</text>
<path d="M38 72l3-2.500l3.500 4l4-4l4 4l2-1.800" fill="none" stroke="#000" stroke-width="1" />
<rect x="60" y="62" width="9" height="9" fill="#000" />
<rect x="61" y="63" width="7" height="7" fill="#fff" />
<rect x="64" y="71" width="1" height="4" fill="#000" />
<text x="62.4" y="69.3" font-size="7" fill="#000" class="lsb" text-anchor="start" >1</text>
<path d="M69.500 64.500l3.500 4.500l3.500-2.500" fill="none" stroke="#000" stroke-width="1" />
<text x="84" y="67" font-size="7.5" fill="#a0a0a0" class="mono" text-anchor="start" textLength="13" lengthAdjust="spacingAndGlyphs" font-weight="normal">VIP</text>
<path d="M86 70.500l4 3.500l9-10" fill="none" stroke="#a0a0a0" stroke-width="2" />
<path d="M106.8 66h7.400l-3.700 3.800z" fill="#a0a0a0" stroke="none" stroke-width="1" />
<rect x="121" y="62" width="11" height="9" fill="#800000" />
<rect x="122" y="63" width="9" height="7" fill="#fff" />
<rect x="125" y="71" width="1" height="4" fill="#000" />
<text x="122.6" y="69.3" font-size="7" fill="#000" class="lsb" text-anchor="start" textLength="7.800" lengthAdjust="spacingAndGlyphs">13</text>
<path d="M132.500 70.500l5-5" fill="none" stroke="#000" stroke-width="1" />
<path d="M145 64.500h12" fill="none" stroke="#0000ff" stroke-width="1" />
<path d="M154 61.500l5 3l-5 3z" fill="#0000ff" stroke="none" stroke-width="1" />
<rect x="145" y="71.0" width="14" height="1" fill="#000" />
<path d="M149 69.0v5l4-2.500z" fill="#000" stroke="none" stroke-width="1" />
<rect x="153" y="69.0" width="1" height="5" fill="#000" />
<rect x="168" y="71.0" width="14" height="1" fill="#000" />
<path d="M172 69.0v5l4-2.500z" fill="#000" stroke="none" stroke-width="1" />
<rect x="176" y="69.0" width="1" height="5" fill="#000" />
<path d="M174.500 61.500q3 2.500 3 5.500q0 3-3 3q-3 0-3-3q0-3 3-5.500z" fill="#ffff00" stroke="none" stroke-width="1" />
<path d="M174.500 64.800l1.800 2.200l-1.800 2.200l-1.800-2.200z" fill="#ff0000" stroke="none" stroke-width="1" />
<path d="M168 60.500l3 0.500l2.500 2" fill="none" stroke="#a0a0a0" stroke-width="2" />
<text x="191.5" y="67.8" font-size="9.2" fill="#0000ff" class="ls" text-anchor="start" textLength="13" lengthAdjust="spacingAndGlyphs" stroke="#0000ff" stroke-width="0.35">ON</text>
<rect x="191" y="71.0" width="14" height="1" fill="#000" />
<path d="M195 69.0v5l4-2.500z" fill="#000" stroke="none" stroke-width="1" />
<rect x="199" y="69.0" width="1" height="5" fill="#000" />
<rect x="213" y="66" width="3" height="3" fill="#000" />
<rect x="226.5" y="66" width="3" height="3" fill="#000" />
<rect x="214" y="67" width="14" height="1.2" fill="#000" />
<rect x="236" y="61" width="1" height="1" fill="#000" />
<rect x="236" y="65" width="1" height="1" fill="#000" />
<rect x="236" y="69" width="1" height="1" fill="#000" />
<rect x="236" y="73" width="1" height="1" fill="#000" />
<rect x="240" y="61" width="1" height="1" fill="#000" />
<rect x="240" y="65" width="1" height="1" fill="#000" />
<rect x="240" y="69" width="1" height="1" fill="#000" />
<rect x="240" y="73" width="1" height="1" fill="#000" />
<rect x="244" y="61" width="1" height="1" fill="#000" />
<rect x="244" y="65" width="1" height="1" fill="#000" />
<rect x="244" y="69" width="1" height="1" fill="#000" />
<rect x="244" y="73" width="1" height="1" fill="#000" />
<rect x="248" y="61" width="1" height="1" fill="#000" />
<rect x="248" y="65" width="1" height="1" fill="#000" />
<rect x="248" y="69" width="1" height="1" fill="#000" />
<rect x="248" y="73" width="1" height="1" fill="#000" />
<rect x="252" y="61" width="1" height="1" fill="#000" />
<rect x="252" y="65" width="1" height="1" fill="#000" />
<rect x="252" y="69" width="1" height="1" fill="#000" />
<rect x="252" y="73" width="1" height="1" fill="#000" />
<path d="M259.8 66h7.400l-3.700 3.800z" fill="#000" stroke="none" stroke-width="1" />
<rect x="274.800" y="61" width="14.500" height="13.200" fill="none" stroke="#000" stroke-width="1.500"/>
<rect x="282.300" y="69.700" width="7" height="4.500" fill="#fff" stroke="#000" stroke-width="1"/>
<rect x="282.3" y="71.5" width="7" height="1" fill="#000" />
<rect x="294" y="57" width="22" height="20" fill="url(#dith)" />
<rect x="294" y="57" width="22" height="1" fill="#a0a0a0" />
<rect x="294" y="57" width="1" height="20" fill="#a0a0a0" />
<rect x="294" y="77" width="23" height="1" fill="#fff" />
<rect x="316" y="57" width="1" height="21" fill="#fff" />
<path d="M302.500 61v3h3.500l-2.500 3l2.500 2.500l-2.500 2.500h-1v3.500" fill="none" stroke="#000" stroke-width="1" />
<path d="M308 67.500v8l1.800-1.700l1.500 3.200l1.500-0.700l-1.500-3.100h2.700z" fill="#000" stroke="none" stroke-width="1" />
<rect x="319" y="59" width="1" height="17" fill="#a0a0a0" />
<rect x="320" y="59" width="1" height="17" fill="#fff" />
<path d="M325.9 65.0h10.600v9.500h-10.600z" fill="#fff" stroke="#000" stroke-width="1"/>
<rect x="327.7" y="69.5" width="3" height="1" fill="#000" />
<rect x="331.7" y="69.5" width="3.5" height="1" fill="#000" />
<rect x="327.7" y="71.8" width="3" height="1" fill="#000" />
<rect x="331.7" y="71.8" width="3.5" height="1" fill="#000" />
<path d="M328.2 66.0l4-4.500h6v4l-4 3.500z" fill="#fff" stroke="#000" stroke-width="1"/>
<path d="M329.7 65.5l3-3 M331.2 66.5l3-3" fill="none" stroke="#000" stroke-width="0.8" />
<rect x="338.8" y="61.3" width="2" height="6" fill="#000080" />
<rect x="347" y="59" width="1" height="17" fill="#a0a0a0" />
<rect x="348" y="59" width="1" height="17" fill="#fff" />
<rect x="355.500" y="62.500" width="8" height="7" fill="none" stroke="#a0a0a0" stroke-width="1"/><rect x="359.500" y="66.500" width="8" height="7" fill="none" stroke="#a0a0a0" stroke-width="1"/>
<rect x="354" y="61" width="3" height="3" fill="#a0a0a0" />
<rect x="362" y="61" width="3" height="3" fill="#a0a0a0" />
<rect x="354" y="68" width="3" height="3" fill="#a0a0a0" />
<rect x="362" y="68" width="3" height="3" fill="#a0a0a0" />
<rect x="358" y="65" width="3" height="3" fill="#a0a0a0" />
<rect x="366" y="65" width="3" height="3" fill="#a0a0a0" />
<rect x="358" y="72" width="3" height="3" fill="#a0a0a0" />
<rect x="366" y="72" width="3" height="3" fill="#a0a0a0" />
<rect x="377" y="67" width="14" height="1" fill="#a0a0a0" />
<path d="M379 64l5.500 3.500l-5.500 3.500z M390 64l-5.500 3.500l5.500 3.500z" fill="#a0a0a0" stroke="none" stroke-width="1" />
<path d="M401 62.500l4.500-1.200q7 0.200 7 6.500q0 6.500-7 6.500q-4-0.500-5.500-3.500" fill="none" stroke="#a0a0a0" stroke-width="1" />
<path d="M399.800 61.200h4v1.200l-2.800 2.800z" fill="#a0a0a0" stroke="none" stroke-width="1" />
<rect x="405.2" y="67.2" width="1.6" height="1.6" fill="#a0a0a0" />
<path d="M431.700 60v15.500" fill="none" stroke="#a0a0a0" stroke-width="1" />
<path d="M427 65.800h8" fill="none" stroke="#a0a0a0" stroke-width="1" />
<path d="M434 63l3.500 2.800l-3.500 2.800z" fill="#a0a0a0" stroke="none" stroke-width="1" />
<path d="M431 65.800h-4q-3.500 0.500-3.500 3.200t3.500 3.200l2 0.500 M433 72h4" fill="none" stroke="#a0a0a0" stroke-width="1" />
<path d="M445 66.200h16" fill="none" stroke="#a0a0a0" stroke-width="1" />
<path d="M450 62v4" fill="none" stroke="#a0a0a0" stroke-width="1" />
<path d="M447.300 64.500l2.700-3.500l2.700 3.500z" fill="#a0a0a0" stroke="none" stroke-width="1" />
<path d="M450 66.500v4q0.500 3.500 3.500 3.500t3.500-3.500v-4 M457.500 62v3" fill="none" stroke="#a0a0a0" stroke-width="1" />
<rect x="467" y="59" width="1" height="17" fill="#a0a0a0" />
<rect x="468" y="59" width="1" height="17" fill="#fff" />
<rect x="475.86" y="61.0" width="1.8599999999999999" height="1.8599999999999999" fill="#000" />
<rect x="479.58" y="61.0" width="1.8599999999999999" height="1.8599999999999999" fill="#000" />
<path d="M475.24 62.55L478.65 62.55L478.65 63.48L478.96 63.48L478.96 62.55L482.06 62.55L483.30 65.34L483.30 69.06L480.20 69.06L480.20 66.58L477.10 66.58L477.10 69.06L474.00 69.06L474.00 65.34z" fill="#000" stroke="none" stroke-width="1" />
<rect x="476.48" y="61.62" width="0.62" height="0.62" fill="#fff" />
<rect x="480.2" y="61.62" width="0.62" height="0.62" fill="#fff" />
<rect x="475.86" y="63.48" width="0.62" height="0.62" fill="#fff" />
<rect x="479.58" y="63.48" width="0.62" height="0.62" fill="#fff" />
<rect x="475.24" y="64.72" width="0.62" height="1.8599999999999999" fill="#fff" />
<rect x="477.72" y="64.72" width="0.62" height="1.55" fill="#fff" />
<rect x="479.58" y="64.72" width="0.62" height="1.8599999999999999" fill="#fff" />
<rect x="474.62" y="67.2" width="0.62" height="1.24" fill="#fff" />
<rect x="480.82" y="67.2" width="0.62" height="1.24" fill="#fff" />
<path d="M476 72.500h1.500l1-1l2 2.500l2-2.500l2 2.500l1.500-1.500h1.500" fill="none" stroke="#000080" stroke-width="1" />
<rect x="499.0" y="61.0" width="3.0" height="3.0" fill="#000" />
<rect x="505.0" y="61.0" width="3.0" height="3.0" fill="#000" />
<path d="M498.00 63.50L503.50 63.50L503.50 65.00L504.00 65.00L504.00 63.50L509.00 63.50L511.00 68.00L511.00 74.00L506.00 74.00L506.00 70.00L501.00 70.00L501.00 74.00L496.00 74.00L496.00 68.00z" fill="#000" stroke="none" stroke-width="1" />
<rect x="500.0" y="62.0" width="1.0" height="1.0" fill="#fff" />
<rect x="506.0" y="62.0" width="1.0" height="1.0" fill="#fff" />
<rect x="499.0" y="65.0" width="1.0" height="1.0" fill="#fff" />
<rect x="505.0" y="65.0" width="1.0" height="1.0" fill="#fff" />
<rect x="498.0" y="67.0" width="1.0" height="3.0" fill="#fff" />
<rect x="502.0" y="67.0" width="1.0" height="2.5" fill="#fff" />
<rect x="505.0" y="67.0" width="1.0" height="3.0" fill="#fff" />
<rect x="497.0" y="71.0" width="1.0" height="2.0" fill="#fff" />
<rect x="507.0" y="71.0" width="1.0" height="2.0" fill="#fff" />
<rect x="518" y="59" width="1" height="17" fill="#a0a0a0" />
<rect x="519" y="59" width="1" height="17" fill="#fff" />
<rect x="525" y="61" width="14" height="10.500" fill="#fff" stroke="#a0a0a0" stroke-width="1.800"/>
<rect x="524" y="60" width="16" height="1.8" fill="#a0a0a0" />
<path d="M528.500 63v7 M527 66.500h4.500 M533 64h4.500 M533 66.500h4.500 M533 69h4.500" fill="none" stroke="#a0a0a0" stroke-width="1" />
<path d="M528 75l3.800-3l3.800 3" fill="none" stroke="#a0a0a0" stroke-width="1" />
<rect x="546" y="59" width="1" height="17" fill="#a0a0a0" />
<rect x="547" y="59" width="1" height="17" fill="#fff" />
<path d="M19.31066 85.7h6.37868l4.51066 4.51066v6.37868l-4.51066 4.51066h-6.37868l-4.51066-4.51066v-6.37868z" fill="#a0a0a0" stroke="none" stroke-width="1" />
<rect x="21.6" y="88.5" width="1.8" height="6" fill="#fff" />
<path d="M22.500 95.800l1.300 1.300l-1.300 1.300l-1.300-1.300z" fill="#fff" stroke="none" stroke-width="1" />
<path d="M42.31066 85.7h6.37868l4.51066 4.51066v6.37868l-4.51066 4.51066h-6.37868l-4.51066-4.51066v-6.37868z" fill="#a0a0a0" stroke="none" stroke-width="1" />
<path d="M42.800 90.700l5.400 5.400m0-5.400l-5.400 5.400" fill="none" stroke="#fff" stroke-width="1.5" />
<rect x="59" y="85" width="1" height="17" fill="#a0a0a0" />
<rect x="60" y="85" width="1" height="17" fill="#fff" />
<pattern id="dg" width="2" height="2" patternUnits="userSpaceOnUse"><rect width="2" height="2" fill="#f0f0f0"/><rect width="1" height="1" fill="#a0a0a0"/><rect x="1" y="1" width="1" height="1" fill="#a0a0a0"/></pattern>
<rect x="65" y="86" width="7.5" height="6.5" fill="#a0a0a0" />
<rect x="73" y="93" width="7.5" height="7" fill="#a0a0a0" />
<rect x="68" y="88" width="9" height="8.5" fill="url(#dg)" />
<rect x="68.500" y="88.500" width="8" height="7.500" fill="none" stroke="#a0a0a0" stroke-width="1"/>
<rect x="88" y="86" width="7.5" height="6.5" fill="#a0a0a0" />
<rect x="96" y="93" width="7.5" height="7" fill="#a0a0a0" />
<rect x="91" y="89" width="9" height="8" fill="#a0a0a0" />
<rect x="93" y="90" width="5" height="5" fill="url(#dg)" />
<rect x="110" y="85" width="1" height="17" fill="#a0a0a0" />
<rect x="111" y="85" width="1" height="17" fill="#fff" />
<path d="M126.5 95.1l5 5" fill="none" stroke="#000" stroke-width="2.2" />
<circle cx="123" cy="91.6" r="5.300" fill="#fff" stroke="#000" stroke-width="1.500"/>
<path d="M119.2 90.1l2.300-2.300 M124.5 95.39999999999999l2.300-2.300" fill="none" stroke="#00e0e0" stroke-width="1" />
<rect x="120" y="90.6" width="6" height="2" fill="#000" />
<rect x="122" y="88.6" width="2" height="6" fill="#000" />
<path d="M149.5 95.1l5 5" fill="none" stroke="#000" stroke-width="2.2" />
<circle cx="146" cy="91.6" r="5.300" fill="#fff" stroke="#000" stroke-width="1.500"/>
<path d="M142.2 90.1l2.300-2.300 M147.5 95.39999999999999l2.300-2.300" fill="none" stroke="#00e0e0" stroke-width="1" />
<rect x="143" y="90.6" width="6" height="2" fill="#000" />
<rect x="161" y="85" width="1" height="17" fill="#a0a0a0" />
<rect x="162" y="85" width="1" height="17" fill="#fff" />
<path d="M168.500 88.500h2l1.500-1.500h4l1.500 1.500h5.500v11h-14.500z" fill="url(#dg)" stroke="none" stroke-width="1" />
<path d="M168.500 88.500h2l1.500-1.500h4l1.500 1.500h5.500v11h-14.500z" fill="none" stroke="#a0a0a0" stroke-width="1" />
<rect x="189" y="85" width="1" height="17" fill="#a0a0a0" />
<rect x="190" y="85" width="1" height="17" fill="#fff" />
<circle cx="201.500" cy="92" r="5" fill="#f0f0f0" stroke="#a0a0a0" stroke-width="1"/>
<path d="M196.500 92h10 M201.500 87v10" fill="none" stroke="#a0a0a0" stroke-width="1" />
<circle cx="204" cy="95" r="5.500" fill="url(#dg)"/>
<text x="219" y="100" font-size="20" fill="#a0a0a0" class="lser" text-anchor="start" >F</text>
<rect x="586" y="58" width="676" height="1" fill="#a0a0a0" />
<rect x="586" y="59" width="676" height="1" fill="#fff" />
<path d="M591 38.5v11.2l2.600-2.500l2.200 4.800l2.100-1l-2.200-4.600h3.800z" fill="#000" stroke="none" stroke-width="1" />
<path d="M610.5 44.5l6.500-6.500" fill="none" stroke="#000" stroke-width="1" />
<rect x="619.5" y="38.5" width="6" height="6" fill="none" stroke="#000" stroke-width="1"/>
<path d="M613.5 45.5l3.500 3.500l-3.500 3.500l-3.500-3.500z" fill="none" stroke="#000" stroke-width="1" />
<circle cx="622.5" cy="49" r="3.400" fill="none" stroke="#000" stroke-width="1" shape-rendering="geometricPrecision"/>
<path d="M633.8 44.2h7.400l-3.700 3.800z" fill="#000" stroke="none" stroke-width="1" />
<rect x="648" y="39" width="1" height="1" fill="#000" />
<rect x="648" y="47" width="1" height="1" fill="#000" />
<rect x="650" y="39" width="1" height="1" fill="#000" />
<rect x="650" y="47" width="1" height="1" fill="#000" />
<rect x="652" y="39" width="1" height="1" fill="#000" />
<rect x="652" y="47" width="1" height="1" fill="#000" />
<rect x="654" y="39" width="1" height="1" fill="#000" />
<rect x="654" y="47" width="1" height="1" fill="#000" />
<rect x="656" y="39" width="1" height="1" fill="#000" />
<rect x="656" y="47" width="1" height="1" fill="#000" />
<rect x="658" y="39" width="1" height="1" fill="#000" />
<rect x="658" y="47" width="1" height="1" fill="#000" />
<rect x="660" y="39" width="1" height="1" fill="#000" />
<rect x="660" y="47" width="1" height="1" fill="#000" />
<rect x="648" y="41" width="1" height="1" fill="#000" />
<rect x="660" y="41" width="1" height="1" fill="#000" />
<rect x="648" y="43" width="1" height="1" fill="#000" />
<rect x="660" y="43" width="1" height="1" fill="#000" />
<rect x="648" y="45" width="1" height="1" fill="#000" />
<rect x="660" y="45" width="1" height="1" fill="#000" />
<path d="M648 49.500h1.500q1.500 0.500 2.500 1.700q1.300 0.800 2.500-1.200l3-6q1.500-2.500 3.500-2.500q2 0.500 2.700 3" fill="none" stroke="#000090" stroke-width="1.25" shape-rendering="geometricPrecision"/>
<path d="M671.300 44.500q1-4.500 3.200-5q2 0 3.500 4q1 2.500 2.500 2t2-2.500q1-2 1.800-1.500q1 0.500 2.500 4" fill="none" stroke="#000090" stroke-width="1.25" shape-rendering="geometricPrecision"/>
<rect x="674" y="39" width="1" height="1" fill="#000" />
<rect x="683" y="39" width="1" height="1" fill="#000" />
<rect x="674" y="41" width="1" height="1" fill="#000" />
<rect x="683" y="41" width="1" height="1" fill="#000" />
<rect x="674" y="43" width="1" height="1" fill="#000" />
<rect x="683" y="43" width="1" height="1" fill="#000" />
<rect x="674" y="45" width="1" height="1" fill="#000" />
<rect x="683" y="45" width="1" height="1" fill="#000" />
<rect x="671" y="48" width="16" height="1" fill="#000" />
<rect x="673" y="51" width="5" height="1" fill="#000" />
<rect x="680" y="51" width="5" height="1" fill="#000" />
<rect x="673" y="53" width="5" height="1" fill="#000" />
<rect x="680" y="53" width="5" height="1" fill="#000" />
<path d="M694 39.500h3v3h11v-3h2.500" fill="none" stroke="#000090" stroke-width="1.25" shape-rendering="geometricPrecision"/>
<rect x="697" y="44" width="1" height="1" fill="#000" />
<rect x="708" y="44" width="1" height="1" fill="#000" />
<rect x="697" y="46" width="1" height="1" fill="#000" />
<rect x="708" y="46" width="1" height="1" fill="#000" />
<rect x="697" y="48" width="1" height="1" fill="#000" />
<rect x="708" y="48" width="1" height="1" fill="#000" />
<rect x="696" y="50" width="4" height="1" fill="#000" />
<rect x="697" y="49" width="1" height="3" fill="#000" />
<rect x="700" y="48" width="1" height="4" fill="#000" />
<rect x="701" y="48" width="4" height="4" fill="#000" />
<rect x="702" y="49" width="2" height="2" fill="#f0f0f0" />
<rect x="706" y="48" width="1" height="4" fill="#000" />
<rect x="706" y="50" width="4" height="1" fill="#000" />
<rect x="708" y="49" width="1" height="3" fill="#000" />
<rect x="721" y="39" width="1" height="1" fill="#000" />
<rect x="723" y="39" width="1" height="1" fill="#000" />
<rect x="725" y="39" width="1" height="1" fill="#000" />
<rect x="727" y="39" width="1" height="1" fill="#000" />
<rect x="721" y="52" width="1" height="1" fill="#000" />
<rect x="723" y="52" width="1" height="1" fill="#000" />
<rect x="719" y="38" width="1" height="5" fill="#000" />
<rect x="718" y="39" width="3" height="1" fill="#000" />
<rect x="719" y="49" width="1" height="5" fill="#000" />
<rect x="718" y="51" width="3" height="1" fill="#000" />
<rect x="717" y="44" width="1" height="4" fill="#000" />
<rect x="719" y="44" width="3" height="4" fill="#000" />
<rect x="720" y="45" width="1" height="2" fill="#f0f0f0" />
<path d="M725 52.500h1l3.200-11q1-2.800 2-2.800q1.200 0.300 1.600 2" fill="none" stroke="#000090" stroke-width="1.25" shape-rendering="geometricPrecision"/>
<rect x="737" y="35" width="22" height="20" fill="url(#dith)" />
<rect x="737" y="35" width="22" height="1" fill="#a0a0a0" />
<rect x="737" y="35" width="1" height="20" fill="#a0a0a0" />
<rect x="737" y="55" width="23" height="1" fill="#fff" />
<rect x="759" y="35" width="1" height="21" fill="#fff" />
<text x="748.8" y="44.6" font-size="6.8" fill="#000" class="lsb" text-anchor="start" textLength="8.400" lengthAdjust="spacingAndGlyphs">1.0</text>
<path d="M757 45.500h-5.500l-5 5" fill="none" stroke="#000" stroke-width="1" />
<path d="M745.500 51.500v-4l4 4z" fill="#000" stroke="none" stroke-width="1" />
<path d="M741 50.500h5v3h5.500v-3h5.500" fill="none" stroke="#000090" stroke-width="1" />
<text x="765.3" y="43.6" font-size="7" fill="#800000" class="lsb" text-anchor="start" textLength="11" lengthAdjust="spacingAndGlyphs">F()</text>
<line x1="764.5" y1="42" x2="764.5" y2="53" stroke="#000" stroke-width="1" stroke-dasharray="1 1.500"/>
<line x1="777.5" y1="42" x2="777.5" y2="53" stroke="#000" stroke-width="1" stroke-dasharray="1 1.500"/>
<path d="M764.500 42v4 M777.500 42v4" fill="none" stroke="#000" stroke-width="1" />
<path d="M764.500 44.500l1.500 1.500l-1.500 2l-1.500-2z M777.500 44.500l1.500 1.500l-1.500 2l-1.500-2z" fill="#000" stroke="none" stroke-width="1" />
<path d="M764.500 52.500q2 0 3.500-2.500t3-2.500t3 2.500t3.500 2.500" fill="none" stroke="#000090" stroke-width="1" />
<text x="786.6" y="52.2" font-size="19.8" fill="#000" class="lser" text-anchor="start" textLength="15.200" lengthAdjust="spacingAndGlyphs">T</text>
<rect x="808" y="37" width="1" height="17" fill="#a0a0a0" />
<rect x="809" y="37" width="1" height="17" fill="#fff" />
<path d="M814.7 43.5h10.600v9.500h-10.600z" fill="#fff" stroke="#000" stroke-width="1"/>
<rect x="816.5" y="48" width="3" height="1" fill="#000" />
<rect x="820.5" y="48" width="3.5" height="1" fill="#000" />
<rect x="816.5" y="50.3" width="3" height="1" fill="#000" />
<rect x="820.5" y="50.3" width="3.5" height="1" fill="#000" />
<path d="M817 44.5l4-4.500h6v4l-4 3.500z" fill="#fff" stroke="#000" stroke-width="1"/>
<path d="M818.5 44l3-3 M820 45l3-3" fill="none" stroke="#000" stroke-width="0.8" />
<rect x="827.6" y="39.8" width="2" height="6" fill="#000080" />
<rect x="836" y="37" width="1" height="17" fill="#a0a0a0" />
<rect x="837" y="37" width="1" height="17" fill="#fff" />
<path d="M844 40v11.200l12.400-5.600z" fill="#000" stroke="none" stroke-width="1" />
<rect x="867" y="40.2" width="12" height="10.7" fill="#a0a0a0" />
<rect x="891" y="40.2" width="4" height="10.7" fill="#a0a0a0" />
<rect x="898" y="40.2" width="4" height="10.7" fill="#a0a0a0" />
<rect x="910" y="37" width="1" height="17" fill="#a0a0a0" />
<rect x="911" y="37" width="1" height="17" fill="#fff" />
<path d="M916.500 52.500l12-12h4" fill="none" stroke="#000" stroke-width="1.15" shape-rendering="geometricPrecision"/>
<rect x="919" y="48" width="2" height="2" fill="#000" />
<rect x="924" y="43" width="2" height="2" fill="#000" />
<path d="M941.500 51.500l12-12" fill="none" stroke="#000" stroke-width="1.15" shape-rendering="geometricPrecision"/>
<rect x="939" y="50" width="3" height="3" fill="#000" />
<rect x="940" y="51" width="1" height="1" fill="#fff" />
<rect x="945" y="44" width="3" height="3" fill="#000" />
<rect x="946" y="45" width="1" height="1" fill="#fff" />
<rect x="951" y="38" width="3" height="3" fill="#000" />
<rect x="952" y="39" width="1" height="1" fill="#fff" />
<rect x="961" y="37" width="1" height="17" fill="#a0a0a0" />
<rect x="962" y="37" width="1" height="17" fill="#fff" />
<rect x="967" y="38" width="16" height="15" fill="#000" />
<rect x="968" y="39" width="13" height="13" fill="#f0f0f0" />
<rect x="970" y="39" width="1" height="2" fill="#000" />
<rect x="970" y="50" width="1" height="2" fill="#000" />
<rect x="972" y="39" width="1" height="2" fill="#000" />
<rect x="972" y="50" width="1" height="2" fill="#000" />
<rect x="974" y="39" width="1" height="2" fill="#000" />
<rect x="974" y="50" width="1" height="2" fill="#000" />
<rect x="976" y="39" width="1" height="2" fill="#000" />
<rect x="976" y="50" width="1" height="2" fill="#000" />
<rect x="978" y="39" width="1" height="2" fill="#000" />
<rect x="978" y="50" width="1" height="2" fill="#000" />
<rect x="980" y="39" width="1" height="2" fill="#000" />
<rect x="980" y="50" width="1" height="2" fill="#000" />
<rect x="968" y="41" width="2" height="1" fill="#000" />
<rect x="979" y="41" width="2" height="1" fill="#000" />
<rect x="968" y="43" width="2" height="1" fill="#000" />
<rect x="979" y="43" width="2" height="1" fill="#000" />
<rect x="968" y="45" width="2" height="1" fill="#000" />
<rect x="979" y="45" width="2" height="1" fill="#000" />
<rect x="968" y="47" width="2" height="1" fill="#000" />
<rect x="979" y="47" width="2" height="1" fill="#000" />
<rect x="968" y="49" width="2" height="1" fill="#000" />
<rect x="979" y="49" width="2" height="1" fill="#000" />
<rect x="990" y="38" width="16" height="15" fill="#000" />
<rect x="991" y="39" width="14" height="13" fill="#f0f0f0" />
<rect x="995" y="39" width="1" height="2" fill="#000" />
<rect x="995" y="50" width="1" height="2" fill="#000" />
<rect x="1000" y="39" width="1" height="2" fill="#000" />
<rect x="1000" y="50" width="1" height="2" fill="#000" />
<rect x="991" y="43" width="2" height="1" fill="#000" />
<rect x="1003" y="43" width="2" height="1" fill="#000" />
<rect x="991" y="48" width="2" height="1" fill="#000" />
<rect x="1003" y="48" width="2" height="1" fill="#000" />
<rect x="994" y="43" width="3" height="1" fill="#000" />
<rect x="995" y="42" width="1" height="3" fill="#000" />
<rect x="999" y="43" width="3" height="1" fill="#000" />
<rect x="1000" y="42" width="1" height="3" fill="#000" />
<rect x="994" y="48" width="3" height="1" fill="#000" />
<rect x="995" y="47" width="1" height="3" fill="#000" />
<rect x="999" y="48" width="3" height="1" fill="#000" />
<rect x="1000" y="47" width="1" height="3" fill="#000" />
<rect x="1012" y="37" width="1" height="17" fill="#a0a0a0" />
<rect x="1013" y="37" width="1" height="17" fill="#fff" />
<rect x="1015" y="35" width="22" height="20" fill="url(#dith)" />
<rect x="1015" y="35" width="22" height="1" fill="#a0a0a0" />
<rect x="1015" y="35" width="1" height="20" fill="#a0a0a0" />
<rect x="1015" y="55" width="23" height="1" fill="#fff" />
<rect x="1037" y="35" width="1" height="21" fill="#fff" />
<rect x="1038" y="35" width="22" height="20" fill="url(#dith)" />
<rect x="1038" y="35" width="22" height="1" fill="#a0a0a0" />
<rect x="1038" y="35" width="1" height="20" fill="#a0a0a0" />
<rect x="1038" y="55" width="23" height="1" fill="#fff" />
<rect x="1060" y="35" width="1" height="21" fill="#fff" />
<rect x="1061" y="35" width="22" height="20" fill="url(#dith)" />
<rect x="1061" y="35" width="22" height="1" fill="#a0a0a0" />
<rect x="1061" y="35" width="1" height="20" fill="#a0a0a0" />
<rect x="1061" y="55" width="23" height="1" fill="#fff" />
<rect x="1083" y="35" width="1" height="21" fill="#fff" />
<rect x="1019" y="39" width="15" height="15" fill="#000" />
<rect x="1020" y="40" width="1" height="13" fill="#fff" />
<rect x="1022" y="40" width="1" height="13" fill="#fff" />
<rect x="1024" y="40" width="1" height="13" fill="#fff" />
<rect x="1026" y="40" width="1" height="13" fill="#fff" />
<rect x="1028" y="40" width="1" height="13" fill="#fff" />
<rect x="1030" y="40" width="1" height="13" fill="#fff" />
<rect x="1032" y="40" width="1" height="13" fill="#fff" />
<rect x="1042" y="39" width="16" height="15" fill="#000" />
<rect x="1043" y="40" width="14" height="1" fill="#fff" />
<rect x="1043" y="42" width="14" height="1" fill="#fff" />
<rect x="1043" y="44" width="14" height="1" fill="#fff" />
<rect x="1043" y="46" width="14" height="1" fill="#fff" />
<rect x="1043" y="48" width="14" height="1" fill="#fff" />
<rect x="1043" y="50" width="14" height="1" fill="#fff" />
<rect x="1043" y="52" width="14" height="1" fill="#fff" />
<rect x="1065" y="39" width="16" height="15" fill="#000" />
<rect x="1066" y="40" width="14" height="13" fill="url(#dith)" />
<rect x="1071" y="40" width="1" height="1" fill="#000" />
<rect x="1071" y="52" width="1" height="1" fill="#000" />
<rect x="1071" y="42" width="1" height="1" fill="#000" />
<rect x="1071" y="44" width="1" height="1" fill="#000" />
<rect x="1071" y="46" width="1" height="1" fill="#000" />
<rect x="1071" y="48" width="1" height="1" fill="#000" />
<rect x="1071" y="50" width="1" height="1" fill="#000" />
<rect x="1074" y="40" width="1" height="1" fill="#000" />
<rect x="1074" y="52" width="1" height="1" fill="#000" />
<rect x="1074" y="42" width="1" height="1" fill="#000" />
<rect x="1074" y="44" width="1" height="1" fill="#000" />
<rect x="1074" y="46" width="1" height="1" fill="#000" />
<rect x="1074" y="48" width="1" height="1" fill="#000" />
<rect x="1074" y="50" width="1" height="1" fill="#000" />
<rect x="1076" y="40" width="1" height="1" fill="#000" />
<rect x="1076" y="52" width="1" height="1" fill="#000" />
<rect x="1076" y="42" width="1" height="1" fill="#000" />
<rect x="1076" y="44" width="1" height="1" fill="#000" />
<rect x="1076" y="46" width="1" height="1" fill="#000" />
<rect x="1076" y="48" width="1" height="1" fill="#000" />
<rect x="1076" y="50" width="1" height="1" fill="#000" />
<rect x="1078" y="40" width="1" height="1" fill="#000" />
<rect x="1078" y="52" width="1" height="1" fill="#000" />
<rect x="1078" y="42" width="1" height="1" fill="#000" />
<rect x="1078" y="44" width="1" height="1" fill="#000" />
<rect x="1078" y="46" width="1" height="1" fill="#000" />
<rect x="1078" y="48" width="1" height="1" fill="#000" />
<rect x="1078" y="50" width="1" height="1" fill="#000" />
<rect x="1087" y="38" width="16" height="15" fill="#000" />
<rect x="1088" y="39" width="14" height="13" fill="#f0f0f0" />
<rect x="1093" y="39" width="1" height="1" fill="#000" />
<rect x="1093" y="51" width="1" height="1" fill="#000" />
<rect x="1093" y="41" width="1" height="1" fill="#000" />
<rect x="1093" y="43" width="1" height="1" fill="#000" />
<rect x="1093" y="45" width="1" height="1" fill="#000" />
<rect x="1093" y="47" width="1" height="1" fill="#000" />
<rect x="1093" y="49" width="1" height="1" fill="#000" />
<rect x="1098" y="39" width="1" height="1" fill="#000" />
<rect x="1098" y="51" width="1" height="1" fill="#000" />
<rect x="1098" y="41" width="1" height="1" fill="#000" />
<rect x="1098" y="43" width="1" height="1" fill="#000" />
<rect x="1098" y="45" width="1" height="1" fill="#000" />
<rect x="1098" y="47" width="1" height="1" fill="#000" />
<rect x="1098" y="49" width="1" height="1" fill="#000" />
<rect x="1109" y="37" width="1" height="17" fill="#a0a0a0" />
<rect x="1110" y="37" width="1" height="17" fill="#fff" />
<rect x="1112" y="35" width="22" height="20" fill="url(#dith)" />
<rect x="1112" y="35" width="22" height="1" fill="#a0a0a0" />
<rect x="1112" y="35" width="1" height="20" fill="#a0a0a0" />
<rect x="1112" y="55" width="23" height="1" fill="#fff" />
<rect x="1134" y="35" width="1" height="21" fill="#fff" />
<rect x="1116" y="39" width="16" height="15" fill="#000" />
<rect x="1117" y="40" width="14" height="9" fill="url(#dith)" />
<rect x="1117" y="50" width="14" height="3" fill="url(#dith)" />
<rect x="1142" y="38" width="1" height="2" fill="#000" />
<rect x="1142" y="42" width="1" height="2" fill="#000" />
<rect x="1142" y="50" width="1" height="2" fill="#000" />
<rect x="1138" y="46" width="2" height="1" fill="#000" />
<rect x="1146" y="46" width="2" height="1" fill="#000" />
<rect x="1150" y="46" width="2" height="1" fill="#000" />
<path d="M1138 48.500h2.500l2-1l2-1l7-5.500l3-1" fill="none" stroke="#0000ff" stroke-width="1" />
<rect x="1160" y="37" width="1" height="17" fill="#a0a0a0" />
<rect x="1161" y="37" width="1" height="17" fill="#fff" />
<path d="M1168 52.500q3 0 5-3.500t2.500-6.500t4-4" fill="none" stroke="#0000ff" stroke-width="1" />
<line x1="1175.5" y1="38" x2="1175.5" y2="54" stroke="#000" stroke-width="1" stroke-dasharray="1 1.500"/>
<path d="M1168 45.500h5" fill="none" stroke="#000" stroke-width="1" />
<path d="M1172 43l3.200 2.500l-3.200 2.500z" fill="#000" stroke="none" stroke-width="1" />
<path d="M1189 50.500q4 0.500 8-2t8-4.500" fill="none" stroke="#0000ff" stroke-width="1" />
<line x1="1197.5" y1="39" x2="1197.5" y2="54" stroke="#000" stroke-width="1" stroke-dasharray="1 1.500"/>
<path d="M1197.500 41v5" fill="none" stroke="#000" stroke-width="1" />
<path d="M1195 45h5l-2.500 3.200z" fill="#000" stroke="none" stroke-width="1" />
<path d="M1212 50.500q4 0.500 8-2t8-4.500" fill="none" stroke="#0000ff" stroke-width="1" />
<line x1="1220.5" y1="39" x2="1220.5" y2="54" stroke="#000" stroke-width="1" stroke-dasharray="1 1.500"/>
<line x1="1224.5" y1="39" x2="1224.5" y2="54" stroke="#000" stroke-width="1" stroke-dasharray="1 1.500"/>
<path d="M1220.500 41v5 M1224.500 40v4" fill="none" stroke="#000" stroke-width="1" />
<path d="M1218 45h5l-2.500 3.200z M1222 43h5l-2.500 3.200z" fill="#000" stroke="none" stroke-width="1" />
<path d="M1235 40.500h4q2 0 4 3t4 3h3.500 M1235 42.800h4q2 0 4 3t4 3h3.500 M1235 45h4q2 0 4 3t4 3h3.500" fill="none" stroke="#b4b4b4" stroke-width="1" />
<rect x="1257" y="37" width="1" height="17" fill="#a0a0a0" />
<rect x="1258" y="37" width="1" height="17" fill="#fff" />
<rect x="587.600" y="65.600" width="15" height="12" fill="#fff" stroke="#000080" stroke-width="1"/>
<path d="M588.500 69l1.500-1.500l1.500 1.500l1.500-1.500l1.500 1.500l1.500-1.500 M598 69l1.500-1.500l1.500 1.500l1-1" fill="none" stroke="#0000ff" stroke-width="1" />
<path d="M588.500 75h2l1 1.200h3l1-1.200 M597 76l2-0.500l1.500-2.500l1.500 0" fill="none" stroke="#ff0000" stroke-width="1" />
<path d="M590.500 74.500l6.500-6.500h4.500v2.500l-5 5.500h-5z" fill="#fff" stroke="#000" stroke-width="1" />
<path d="M597 68l-1.500 4.500h-4" fill="none" stroke="#000" stroke-width="1" />
<rect x="609" y="63" width="1" height="17" fill="#a0a0a0" />
<rect x="610" y="63" width="1" height="17" fill="#fff" />
<rect x="612" y="61" width="22" height="20" fill="url(#dith)" />
<rect x="612" y="61" width="22" height="1" fill="#a0a0a0" />
<rect x="612" y="61" width="1" height="20" fill="#a0a0a0" />
<rect x="612" y="81" width="23" height="1" fill="#fff" />
<rect x="634" y="61" width="1" height="21" fill="#fff" />
<line x1="623.5" y1="65" x2="623.5" y2="80.5" stroke="#000" stroke-width="1.2" stroke-dasharray="1.300 1.300"/>
<path d="M616.500 72.500h15.500" fill="none" stroke="#0000ff" stroke-width="1" />
<rect x="617.0" y="71.0" width="3" height="3" rx="0.800" fill="#0000ff"/>
<rect x="622.0" y="71.0" width="3" height="3" rx="0.800" fill="#0000ff"/>
<rect x="627.0" y="71.0" width="3" height="3" rx="0.800" fill="#0000ff"/>
<line x1="645.5" y1="65" x2="645.5" y2="78.5" stroke="#000" stroke-width="1.2" stroke-dasharray="1.300 1.300"/>
<path d="M638 71.600h16" fill="none" stroke="#0000ff" stroke-width="1" />
<rect x="639.5" y="70.1" width="3" height="3" rx="0.800" fill="#0000ff"/>
<rect x="649.0" y="70.1" width="3" height="3" rx="0.800" fill="#0000ff"/>
<line x1="669.5" y1="65" x2="669.5" y2="78.5" stroke="#000" stroke-width="1.2" stroke-dasharray="1.300 1.300"/>
<path d="M661.500 78.500q2-1 3.500-6t3-7.500q1.500-1.500 3 0q1.500 2.500 3 7.500t3.500 6" fill="none" stroke="#0000ff" stroke-width="1.3" shape-rendering="geometricPrecision"/>
<line x1="692.5" y1="65" x2="692.5" y2="78.5" stroke="#000" stroke-width="1.2" stroke-dasharray="1.300 1.300"/>
<path d="M684.500 64.500q1.500 1 3 7t3.500 6.800q1.500 0.700 3 0q2-0.800 3.500-6.800t2.500-7" fill="none" stroke="#0000ff" stroke-width="1.3" shape-rendering="geometricPrecision"/>
<line x1="718.5" y1="65" x2="718.5" y2="78.5" stroke="#000" stroke-width="1.2" stroke-dasharray="1.300 1.300"/>
<path d="M707.500 74q1.500-1.500 2.500 0.500t2 2.500q1.500 0.500 2.500-2.500l2.500-7q1.500-2.500 2.500 0l3 8" fill="none" stroke="#0000ff" stroke-width="1.3" shape-rendering="geometricPrecision"/>
<line x1="741.5" y1="65" x2="741.5" y2="78.5" stroke="#000" stroke-width="1.2" stroke-dasharray="1.300 1.300"/>
<path d="M730.500 67.500q1 2 2 0t2.500-2q1.500 0 2.500 3l2.500 6.500q1.500 2.500 2.500 0l3-8.500" fill="none" stroke="#0000ff" stroke-width="1.3" shape-rendering="geometricPrecision"/>
<line x1="760.5" y1="64" x2="760.5" y2="79.5" stroke="#000" stroke-width="1.2" stroke-dasharray="1.300 1.300"/>
<path d="M753 78.800h1.500l14.500-15" fill="none" stroke="#0000ff" stroke-width="1.3" shape-rendering="geometricPrecision"/>
<line x1="783.5" y1="67" x2="783.5" y2="78.5" stroke="#000" stroke-width="1.2" stroke-dasharray="1.300 1.300"/>
<path d="M776 75.500q3.500-9 6.500-10q3 0.500 5 5.500l3 6.500 M780.500 77.500q3-7.500 5-9q2.500-1.500 4-1.200l2.500 2.200" fill="none" stroke="#0000ff" stroke-width="1.3" shape-rendering="geometricPrecision"/>
<line x1="806.5" y1="65" x2="806.5" y2="77.5" stroke="#000" stroke-width="1.2" stroke-dasharray="1.300 1.300"/>
<path d="M799.500 67.500q4.500 9.500 6.500 10q3-1 4.500-5l3.500-7 M803.500 65.500q3.500 9.500 6 10q2.500 0.500 5-2" fill="none" stroke="#0000ff" stroke-width="1.3" shape-rendering="geometricPrecision"/>
<line x1="830.5" y1="64" x2="830.5" y2="79.5" stroke="#000" stroke-width="1.2" stroke-dasharray="1.300 1.300"/>
<path d="M822.500 65.5h2l4 4q1.700 0.800 3.500 0l5.500-4.500" fill="none" stroke="#0000ff" stroke-width="1.3" shape-rendering="geometricPrecision"/>
<path d="M822.500 68.5h2l4 4q1.700 0.800 3.500 0l5.500-4.500" fill="none" stroke="#0000ff" stroke-width="1.3" shape-rendering="geometricPrecision"/>
<path d="M822.500 71.5h2l4 4q1.700 0.800 3.500 0l5.500-4.500" fill="none" stroke="#0000ff" stroke-width="1.3" shape-rendering="geometricPrecision"/>
<circle cx="830.500" cy="76.500" r="2" fill="#0000ff" shape-rendering="geometricPrecision"/>
<line x1="853.5" y1="64" x2="853.5" y2="79.5" stroke="#000" stroke-width="1.2" stroke-dasharray="1.300 1.300"/>
<path d="M845.500 72.5h2l4.500-4.500q1.500-0.800 3 0l6 5" fill="none" stroke="#0000ff" stroke-width="1.3" shape-rendering="geometricPrecision"/>
<path d="M845.500 75.5h2l4.500-4.500q1.500-0.800 3 0l6 5" fill="none" stroke="#0000ff" stroke-width="1.3" shape-rendering="geometricPrecision"/>
<path d="M845.500 78.5h2l4.500-4.500q1.500-0.800 3 0l6 5" fill="none" stroke="#0000ff" stroke-width="1.3" shape-rendering="geometricPrecision"/>
<circle cx="853.500" cy="67.500" r="2" fill="#0000ff" shape-rendering="geometricPrecision"/>
<rect x="867" y="63" width="1" height="17" fill="#a0a0a0" />
<rect x="868" y="63" width="1" height="17" fill="#fff" />
<pattern id="dy" width="2" height="2" patternUnits="userSpaceOnUse"><rect width="2" height="2" fill="#ffff00"/><rect width="1" height="1" fill="#8a8a00"/><rect x="1" y="1" width="1" height="1" fill="#8a8a00"/></pattern>
<path d="M874 70.500h11.500v8.500h-11.500z" fill="url(#dy)" stroke="#000" stroke-width="1" />
<path d="M885.500 70.500l3.500-3v8l-3.500 3.500z" fill="#6c6c00" stroke="#000" stroke-width="1" />
<path d="M874 70.500l2-2.500h12.500" fill="none" stroke="#000" stroke-width="1" />
<rect x="879" y="72.5" width="3" height="3" fill="#000" />
<rect x="880" y="75.5" width="1" height="2" fill="#000" />
<path d="M875 69l3-4l3.500 2l-1 3z" fill="#fff" stroke="#0000ff" stroke-width="1" />
<path d="M876.500 68l2-2 M878 69.500l2-2" fill="none" stroke="#0000ff" stroke-width="0.8" />
<path d="M881 64.500h5.500v5h-4z" fill="#fff" stroke="#0000c0" stroke-width="1" />
<path d="M882.500 65.500l3 3.500v-3.500z" fill="#ff0000" stroke="none" stroke-width="1" />
<path d="M896.8 70.2h7.400l-3.700 3.800z" fill="#000" stroke="none" stroke-width="1" />
<rect x="910" y="63" width="1" height="17" fill="#a0a0a0" />
<rect x="911" y="63" width="1" height="17" fill="#fff" />
<rect x="916.800" y="64.500" width="14.600" height="13.800" fill="#fff" stroke="#000" stroke-width="1.500"/>
<rect x="918.6" y="66.6" width="3" height="1" fill="#000" />
<rect x="922.9" y="66.6" width="3" height="1" fill="#000" />
<rect x="927.2" y="66.6" width="3" height="1" fill="#000" />
<rect x="918.6" y="68.6" width="3" height="1" fill="#000" />
<rect x="922.9" y="68.6" width="3" height="1" fill="#000" />
<rect x="927.2" y="68.6" width="3" height="1" fill="#000" />
<rect x="918.6" y="70.6" width="3" height="1" fill="#000" />
<rect x="922.9" y="70.6" width="3" height="1" fill="#000" />
<rect x="927.2" y="70.6" width="3" height="1" fill="#000" />
<rect x="918.6" y="72.6" width="3" height="1" fill="#000" />
<rect x="922.9" y="72.6" width="3" height="1" fill="#000" />
<rect x="927.2" y="72.6" width="3" height="1" fill="#000" />
<rect x="918.6" y="74.6" width="3" height="1" fill="#000" />
<rect x="922.9" y="74.6" width="3" height="1" fill="#000" />
<rect x="927.2" y="74.6" width="3" height="1" fill="#000" />
<rect x="918.6" y="76.6" width="3" height="1" fill="#000" />
<rect x="922.9" y="76.6" width="3" height="1" fill="#000" />
<rect x="927.2" y="76.6" width="3" height="1" fill="#000" />
<rect x="938" y="63" width="1" height="17" fill="#a0a0a0" />
<rect x="939" y="63" width="1" height="17" fill="#fff" />
<text x="944" y="78.6" font-size="20" fill="#000" class="ls" text-anchor="start" textLength="16.200" lengthAdjust="spacingAndGlyphs" stroke="#000" stroke-width="0.4">'P'</text>
<rect x="966" y="63" width="1" height="17" fill="#a0a0a0" />
<rect x="967" y="63" width="1" height="17" fill="#fff" />
<rect x="969" y="61" width="22" height="20" fill="url(#dith)" />
<rect x="969" y="61" width="22" height="1" fill="#a0a0a0" />
<rect x="969" y="61" width="1" height="20" fill="#a0a0a0" />
<rect x="969" y="81" width="23" height="1" fill="#fff" />
<rect x="991" y="61" width="1" height="21" fill="#fff" />
<rect x="992" y="61" width="22" height="20" fill="url(#dith)" />
<rect x="992" y="61" width="22" height="1" fill="#a0a0a0" />
<rect x="992" y="61" width="1" height="20" fill="#a0a0a0" />
<rect x="992" y="81" width="23" height="1" fill="#fff" />
<rect x="1014" y="61" width="1" height="21" fill="#fff" />
<rect x="981" y="70" width="2" height="9" fill="#000" />
<path d="M979 80h6l-2-2.500h-2z" fill="#000" stroke="none" stroke-width="1" />
<path d="M982 71.500q-5 0.500-6.500 4.500 M982 71.500q5 0.500 6.500 4.500" fill="none" stroke="#000" stroke-width="1" />
<rect x="974" y="75" width="5" height="2" fill="#000" />
<rect x="985" y="75" width="5" height="2" fill="#000" />
<rect x="973" y="75" width="1" height="1" fill="#000" />
<rect x="990" y="75" width="1" height="1" fill="#000" />
<rect x="975" y="75" width="1" height="1" fill="#ffff00" />
<rect x="977" y="75" width="1" height="1" fill="#ffff00" />
<rect x="986" y="75" width="1" height="1" fill="#ffff00" />
<rect x="988" y="75" width="1" height="1" fill="#ffff00" />
<rect x="1004" y="70" width="2" height="9" fill="#000" />
<path d="M1002 80h6l-2-2.500h-2z" fill="#000" stroke="none" stroke-width="1" />
<path d="M1005 71.500q-5 0.500-6.500 4.500 M1005 71.500q5 0.500 6.500 4.500" fill="none" stroke="#000" stroke-width="1" />
<rect x="997" y="75" width="5" height="2" fill="#000" />
<rect x="1008" y="75" width="5" height="2" fill="#000" />
<rect x="996" y="75" width="1" height="1" fill="#000" />
<rect x="1013" y="75" width="1" height="1" fill="#000" />
<rect x="998" y="75" width="1" height="1" fill="#ffff00" />
<rect x="1000" y="75" width="1" height="1" fill="#ffff00" />
<rect x="1009" y="75" width="1" height="1" fill="#ffff00" />
<rect x="1011" y="75" width="1" height="1" fill="#ffff00" />
<text x="972.6" y="71" font-size="9" fill="#900000" class="lsb" text-anchor="start" stroke="#900000" stroke-width="0.5">X</text>
<text x="995.8" y="71.3" font-size="9" fill="#900000" class="lsb" text-anchor="start" stroke="#900000" stroke-width="0.5">Y</text>
<rect x="1017" y="63" width="1" height="17" fill="#a0a0a0" />
<rect x="1018" y="63" width="1" height="17" fill="#fff" />
<path d="M1033.5 73.2l5 5" fill="none" stroke="#000" stroke-width="2.2" />
<circle cx="1030" cy="69.7" r="5.300" fill="#fff" stroke="#000" stroke-width="1.500"/>
<path d="M1026.2 68.2l2.300-2.300 M1031.5 73.5l2.300-2.300" fill="none" stroke="#00e0e0" stroke-width="1" />
<rect x="1027" y="68.7" width="6" height="2" fill="#000" />
<rect x="1029" y="66.7" width="2" height="6" fill="#000" />
<path d="M1056.7 73.2l5 5" fill="none" stroke="#000" stroke-width="2.2" />
<circle cx="1053.2" cy="69.7" r="5.300" fill="#fff" stroke="#000" stroke-width="1.500"/>
<path d="M1049.4 68.2l2.300-2.300 M1054.7 73.5l2.300-2.300" fill="none" stroke="#00e0e0" stroke-width="1" />
<rect x="1050.2" y="68.7" width="6" height="2" fill="#000" />
<path d="M1079.8 73.2l5 5" fill="none" stroke="#000" stroke-width="2.2" />
<circle cx="1076.3" cy="69.7" r="5.300" fill="#fff" stroke="#000" stroke-width="1.500"/>
<path d="M1072.5 68.2l2.300-2.300 M1077.8 73.5l2.300-2.300" fill="none" stroke="#00e0e0" stroke-width="1" />
<rect x="1072.3" y="67.0" width="8" height="5.500" fill="#fff" stroke="#000080" stroke-width="1"/>
<path d="M1073.3 71.2l1.500-2.500l1.500 2l1.500-2l1.500 2.500" fill="none" stroke="#ff0000" stroke-width="1" />
<rect x="1091" y="63" width="1" height="17" fill="#a0a0a0" />
<rect x="1092" y="63" width="1" height="17" fill="#fff" />
<circle cx="1103" cy="70" r="5" fill="#f0f0f0" stroke="#a0a0a0" stroke-width="1"/>
<path d="M1098 70h10 M1103 65v10" fill="none" stroke="#a0a0a0" stroke-width="1" />
<circle cx="1106" cy="73" r="5.800" fill="url(#dg)"/>
<text x="1120.5" y="78.3" font-size="21.5" fill="#000" class="lser" text-anchor="start" >F</text>
</g>
<rect x="583" y="638" width="685" height="18" fill="#f0f0f0" />
<rect x="583" y="655" width="685" height="2" fill="#fff" />
<line x1="714" y1="638.5" x2="1249" y2="638.5" stroke="#000" stroke-width="1" />
<rect x="583" y="638" width="87" height="17" fill="#707070" />
<rect x="583" y="639" width="5" height="14" fill="#f0f0f0"/>
<rect x="589.5" y="639" width="14.500" height="14" fill="#f0f0f0"/>
<rect x="589.5" y="639" width="14.500" height="1" fill="#fff"/><rect x="589.5" y="639" width="1" height="14" fill="#fff"/>
<rect x="605.5" y="639" width="14.500" height="14" fill="#f0f0f0"/>
<rect x="605.5" y="639" width="14.500" height="1" fill="#fff"/><rect x="605.5" y="639" width="1" height="14" fill="#fff"/>
<rect x="621.5" y="639" width="14.500" height="14" fill="#f0f0f0"/>
<rect x="621.5" y="639" width="14.500" height="1" fill="#fff"/><rect x="621.5" y="639" width="1" height="14" fill="#fff"/>
<rect x="637.5" y="639" width="14.500" height="14" fill="#f0f0f0"/>
<rect x="637.5" y="639" width="14.500" height="1" fill="#fff"/><rect x="637.5" y="639" width="1" height="14" fill="#fff"/>
<rect x="653.5" y="639" width="14.500" height="14" fill="#f0f0f0"/>
<rect x="653.5" y="639" width="14.500" height="1" fill="#fff"/><rect x="653.5" y="639" width="1" height="14" fill="#fff"/>
<path d="M593.500 645.500h6l-3 3.500z" fill="#000" stroke="none" stroke-width="1" />
<path d="M609.300 642.300h1.500v7.600h-1.500z M616.500 642.300v7.600l-5-3.800z" fill="#000" stroke="none" stroke-width="1" />
<path d="M632.800 642.300v7.600l-5.500-3.800z" fill="#000" stroke="none" stroke-width="1" />
<path d="M643 642.300v7.600l5.500-3.800z" fill="#000" stroke="none" stroke-width="1" />
<path d="M658.500 642.300v7.600l5-3.800z M664.500 642.300h1.500v7.600h-1.500z" fill="#000" stroke="none" stroke-width="1" />
<path d="M670 638L677 654.5H706L714 638z" fill="#fff" stroke="none" stroke-width="1" />
<path d="M670.5 638L677 654.5H706.500L714 638.5" fill="none" stroke="#000" stroke-width="1" />
<text x="678.5" y="649.5" font-size="11" fill="#000" class="lsb" text-anchor="start" textLength="25.5" lengthAdjust="spacingAndGlyphs">Main</text>
<rect x="1249" y="638" width="17" height="7" fill="#f0f0f0" />
<rect x="1249" y="644" width="17" height="1" fill="#696969" />
<rect x="1265" y="638" width="1" height="7" fill="#696969" />
<rect x="1249" y="638" width="17" height="1" fill="#fff" />
<ellipse cx="762.5" cy="211.5" rx="20.5" ry="13.5" fill="none" stroke="#ee1c25" stroke-width="3"/>
<path d="M527.44 363.67L745.93 221.22L744.07 218.38L526.56 362.33z" fill="#ee1c25" stroke="#ee1c25" stroke-width="0.8" stroke-linejoin="round"/>
<path d="M716.500 227.700L745 219.800L730 242" fill="none" stroke="#ee1c25" stroke-width="3.2" stroke-linecap="round" stroke-linejoin="round"/>
</svg>
</body></html>
